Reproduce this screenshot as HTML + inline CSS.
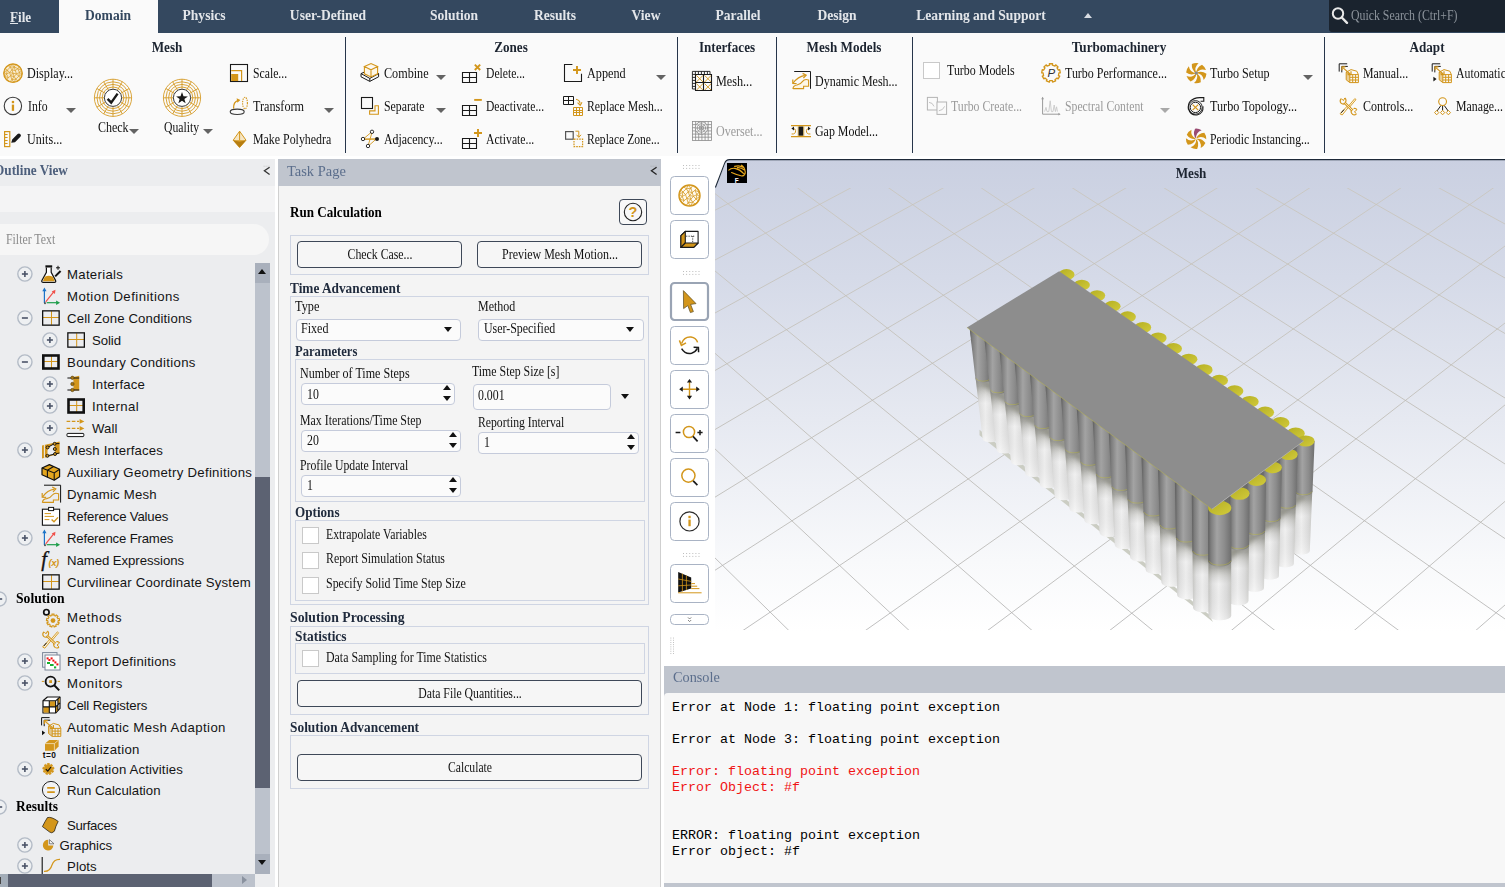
<!DOCTYPE html>
<html lang="en"><head><meta charset="utf-8"><title>Fluent</title>
<style>
*{box-sizing:border-box;margin:0;padding:0}
html,body{width:1505px;height:887px;overflow:hidden;background:#fff}
body{position:relative;font-family:"Liberation Serif",serif;font-size:13px;color:#000}
.a{position:absolute;white-space:pre;line-height:1}
.t{position:absolute;white-space:pre;line-height:16px;height:16px;font-size:14.5px;color:#111;transform:scaleX(.815);transform-origin:0 0}
.tb{position:absolute;white-space:pre;line-height:16px;height:16px;font-size:13.7px;font-weight:bold;transform:scaleX(.96);transform-origin:0 0}
.tc{transform-origin:50% 0}
.tabt{font-size:14.2px;transform:scaleX(.955)}
.g{color:#9a9a9a}
.tab{color:#e3e6ea}
.tr{position:absolute;white-space:pre;font-family:"Liberation Sans",sans-serif;font-size:13.2px;line-height:18px;height:18px;color:#141414}
.mono{position:absolute;white-space:pre;font-family:"Liberation Mono",monospace;font-size:13.33px;line-height:16px;color:#000}
svg{position:absolute;overflow:visible}
.sep{position:absolute;width:1px;background:#26354a;top:37px;height:116px}
.arr{position:absolute;width:0;height:0;border-left:5px solid transparent;border-right:5px solid transparent;border-top:5.4px solid #636363}
.btn{position:absolute;border:1px solid #3e4858;border-radius:4px;background:#f6f6f6;text-align:center;font-size:13px;letter-spacing:-0.5px;line-height:25px;color:#111}
.grp{position:absolute;border:1px solid #cfd5e3}
.inp{position:absolute;border:1px solid #c5cbdb;border-radius:4px;background:#fbfbfb}
.cb{position:absolute;width:17px;height:17px;border:1px solid #c9c9c9;background:#fff}
.gb{position:absolute;width:39px;height:39px;border:1px solid #a9b3c4;border-radius:4px;background:#fff}
</style></head>
<body>
<div class="a" style="left:0;top:0;width:1505px;height:33px;background:#34485f"></div>
<div class="a" style="left:59px;top:0;width:99px;height:33px;background:#fafafa"></div>
<div class="a" style="left:0;top:33px;width:1505px;height:123px;background:#fafafa"></div>
<div class="tb tab tabt" style="left:10px;top:9.21px;font-size:14.6px;transform:scaleX(.9)"><u>F</u>ile</div>
<div class="tb tc tabt" style="left:-42px;width:300px;text-align:center;top:7.21px;color:#34485f">Domain</div>
<div class="tb tc tab tabt" style="left:54px;width:300px;text-align:center;top:7.21px;">Physics</div>
<div class="tb tc tab tabt" style="left:178px;width:300px;text-align:center;top:7.21px;">User-Defined</div>
<div class="tb tc tab tabt" style="left:304px;width:300px;text-align:center;top:7.21px;">Solution</div>
<div class="tb tc tab tabt" style="left:405px;width:300px;text-align:center;top:7.21px;">Results</div>
<div class="tb tc tab tabt" style="left:496px;width:300px;text-align:center;top:7.21px;">View</div>
<div class="tb tc tab tabt" style="left:588px;width:300px;text-align:center;top:7.21px;">Parallel</div>
<div class="tb tc tab tabt" style="left:687px;width:300px;text-align:center;top:7.21px;">Design</div>
<div class="tb tc tab tabt" style="left:830.5px;width:300px;text-align:center;top:7.21px;">Learning and Support</div>
<div class="a" style="left:1083.5px;top:13px;width:0;height:0;border-left:4.5px solid transparent;border-right:4.5px solid transparent;border-bottom:5px solid #d8dce2"></div>
<div class="a" style="left:1329px;top:0;width:176px;height:32px;background:#1a232e;border-radius:0 0 0 3px"></div>
<svg style="left:1331px;top:6px" width="18" height="18" viewBox="0 0 18 18"><circle cx="7" cy="7.5" r="5.2" fill="none" stroke="#e8e8e8" stroke-width="2"/><path d="M10.8 11.5 L16 16.8" stroke="#e8e8e8" stroke-width="2.4" stroke-linecap="round"/></svg>
<div class="t " style="left:1351px;top:7.11px;color:#8d949c">Quick Search (Ctrl+F)</div>
<div class="sep" style="left:345px"></div>
<div class="sep" style="left:677px"></div>
<div class="sep" style="left:776px"></div>
<div class="sep" style="left:912px"></div>
<div class="sep" style="left:1324px"></div>
<div class="tb tc " style="left:16.5px;width:300px;text-align:center;top:40.18px;color:#1c2430">Mesh</div>
<div class="tb tc " style="left:360.5px;width:300px;text-align:center;top:40.18px;color:#1c2430">Zones</div>
<div class="tb tc " style="left:577px;width:300px;text-align:center;top:40.18px;color:#1c2430">Interfaces</div>
<div class="tb tc " style="left:694px;width:300px;text-align:center;top:40.18px;color:#1c2430">Mesh Models</div>
<div class="tb tc " style="left:968.5px;width:300px;text-align:center;top:40.18px;color:#1c2430">Turbomachinery</div>
<div class="tb tc " style="left:1277px;width:300px;text-align:center;top:40.18px;color:#1c2430">Adapt</div>
<div class="t " style="left:27.2px;top:65.11px;transform:scaleX(0.836);">Display...</div>
<div class="t " style="left:28px;top:98.11px;transform:scaleX(0.811);">Info</div>
<div class="arr" style="left:65.6px;top:108px;border-top-color:#636363"></div>
<div class="t " style="left:27px;top:131.11px;transform:scaleX(0.832);">Units...</div>
<div class="t " style="left:97.9px;top:119.11px;transform:scaleX(0.826);">Check</div>
<div class="arr" style="left:128.6px;top:129px;border-top-color:#636363"></div>
<div class="t " style="left:164px;top:119.11px;transform:scaleX(0.809);">Quality</div>
<div class="arr" style="left:203.29999999999998px;top:129px;border-top-color:#636363"></div>
<div class="t " style="left:253px;top:65.11px;transform:scaleX(0.807);">Scale...</div>
<div class="t " style="left:253px;top:98.11px;transform:scaleX(0.842);">Transform</div>
<div class="arr" style="left:323.6px;top:108px;border-top-color:#636363"></div>
<div class="t " style="left:253px;top:131.11px;transform:scaleX(0.820);">Make Polyhedra</div>
<div class="t " style="left:384px;top:65.11px;transform:scaleX(0.839);">Combine</div>
<div class="arr" style="left:435.6px;top:75px;border-top-color:#636363"></div>
<div class="t " style="left:384px;top:98.11px;transform:scaleX(0.813);">Separate</div>
<div class="arr" style="left:435.6px;top:108px;border-top-color:#636363"></div>
<div class="t " style="left:384px;top:131.11px;transform:scaleX(0.815);">Adjacency...</div>
<div class="t " style="left:486px;top:65.11px;transform:scaleX(0.801);">Delete...</div>
<div class="t " style="left:486px;top:98.11px;transform:scaleX(0.797);">Deactivate...</div>
<div class="t " style="left:486px;top:131.11px;transform:scaleX(0.805);">Activate...</div>
<div class="t " style="left:587px;top:65.11px;transform:scaleX(0.841);">Append</div>
<div class="arr" style="left:655.6px;top:75px;border-top-color:#636363"></div>
<div class="t " style="left:587px;top:98.11px;transform:scaleX(0.809);">Replace Mesh...</div>
<div class="t " style="left:587px;top:131.11px;transform:scaleX(0.798);">Replace Zone...</div>
<div class="t " style="left:715.8px;top:73.11px;transform:scaleX(0.840);">Mesh...</div>
<div class="t g" style="left:715.8px;top:123.11px;transform:scaleX(0.829);">Overset...</div>
<div class="t " style="left:815px;top:73.11px;transform:scaleX(0.827);">Dynamic Mesh...</div>
<div class="t " style="left:815px;top:123.11px;transform:scaleX(0.823);">Gap Model...</div>
<div class="cb" style="left:923px;top:62px"></div>
<div class="t " style="left:947px;top:62.11px;transform:scaleX(0.824);">Turbo Models</div>
<div class="t g" style="left:951px;top:98.11px;transform:scaleX(0.814);">Turbo Create...</div>
<div class="t " style="left:1065px;top:65.11px;transform:scaleX(0.825);">Turbo Performance...</div>
<div class="t g" style="left:1065px;top:98.11px;transform:scaleX(0.810);">Spectral Content</div>
<div class="arr" style="left:1159.6px;top:108px;border-top-color:#a8a8a8"></div>
<div class="t " style="left:1210px;top:65.11px;transform:scaleX(0.833);">Turbo Setup</div>
<div class="arr" style="left:1302.6px;top:75px;border-top-color:#636363"></div>
<div class="t " style="left:1210px;top:98.11px;transform:scaleX(0.840);">Turbo Topology...</div>
<div class="t " style="left:1210px;top:131.11px;transform:scaleX(0.810);">Periodic Instancing...</div>
<div class="t " style="left:1362.7px;top:65.11px;transform:scaleX(0.819);">Manual...</div>
<div class="t " style="left:1455.7px;top:65.11px;">Automatic</div>
<div class="t " style="left:1362.7px;top:98.11px;transform:scaleX(0.827);">Controls...</div>
<div class="t " style="left:1455.7px;top:98.11px;transform:scaleX(0.815);">Manage...</div>
<svg style="left:0;top:0" width="1505" height="160" viewBox="0 0 1505 160"><circle cx="13" cy="73.2" r="9.3" fill="#f8ebcd" stroke="#d3961b" stroke-width="1.2"/><path d="M13.0 73.2L14.1 76.6M13.0 73.2L11.9 69.8M13.0 73.2L16.5 73.9M13.0 73.2L9.5 72.5M13.0 73.2L10.7 75.8M16.5 73.9L18.7 76.3M16.5 73.9L19.5 72.4M16.5 73.9L15.3 70.6M16.5 73.9L14.1 76.6M14.1 76.6L15.8 79.1M14.1 76.6L10.7 75.8M14.1 76.6L11.8 79.6M10.7 75.8L8.3 77.7M10.7 75.8L9.5 72.5M10.7 75.8L11.8 79.6M9.5 72.5L7.3 70.1M9.5 72.5L6.5 74.0M9.5 72.5L11.9 69.8M11.9 69.8L10.2 67.3M11.9 69.8L15.3 70.6M11.9 69.8L14.2 66.8M15.3 70.6L17.7 68.7M15.3 70.6L14.2 66.8M18.7 76.3L20.6 77.9M18.7 76.3L21.9 74.1M18.7 76.3L19.5 72.4M18.7 76.3L15.8 79.1M15.8 79.1L17.8 80.7M15.8 79.1L14.1 82.1M15.8 79.1L11.8 79.6M11.8 79.6L10.2 81.7M11.8 79.6L14.1 82.1M8.3 77.7L6.8 79.6M8.3 77.7L4.6 76.3M8.3 77.7L6.5 74.0M6.5 74.0L4.6 76.3M6.5 74.0L4.1 72.3M6.5 74.0L7.3 70.1M7.3 70.1L5.4 68.5M7.3 70.1L4.1 72.3M7.3 70.1L10.2 67.3M10.2 67.3L8.2 65.7M10.2 67.3L11.9 64.3M10.2 67.3L14.2 66.8M14.2 66.8L15.8 64.7M14.2 66.8L11.9 64.3M14.2 66.8L17.7 68.7M17.7 68.7L19.2 66.8M17.7 68.7L21.4 70.1M17.7 68.7L19.5 72.4M19.5 72.4L21.4 70.1M19.5 72.4L21.9 74.1M21.9 74.1L21.4 70.1M21.9 74.1L20.6 77.9M20.6 77.9L17.8 80.7M17.8 80.7L14.1 82.1M14.1 82.1L10.2 81.7M10.2 81.7L6.8 79.6M6.8 79.6L4.6 76.3M4.6 76.3L4.1 72.3M4.1 72.3L5.4 68.5M5.4 68.5L8.2 65.7M8.2 65.7L11.9 64.3M11.9 64.3L15.8 64.7M15.8 64.7L19.2 66.8M19.2 66.8L21.4 70.1" stroke="#d3961b" stroke-width="0.65" fill="none"/><circle cx="12.9" cy="105.9" r="8.7" fill="none" stroke="#3a3a3a" stroke-width="1.1"/><rect x="11.8" y="104.6" width="2.3" height="6.2" fill="#d3961b"/><rect x="11.8" y="100.9" width="2.3" height="2.3" fill="#d3961b"/><rect x="4.6" y="131.6" width="5.2" height="15" fill="none" stroke="#d3961b" stroke-width="1.2"/><path d="M4.6 134.5h3M4.6 137.5h3M4.6 140.5h3M4.6 143.5h3" stroke="#d3961b" stroke-width="1"/><path d="M11.2 142.8 L12.2 139.4 L17.6 134 Q19 132.8 20.4 134.2 Q21.6 135.6 20.4 136.8 L15 142.2 Z" fill="#1a1a1a"/><circle cx="113" cy="97.8" r="18.6" fill="none" stroke="#d3961b" stroke-width="0.85"/><circle cx="113" cy="97.8" r="16.0" fill="none" stroke="#d3961b" stroke-width="0.85"/><circle cx="113" cy="97.8" r="13.4" fill="none" stroke="#d3961b" stroke-width="0.85"/><circle cx="113" cy="97.8" r="10.8" fill="none" stroke="#d3961b" stroke-width="0.85"/><path d="M113.00 88.80L113.00 79.20M117.50 90.01L122.30 81.69M120.79 93.30L129.11 88.50M122.00 97.80L131.60 97.80M120.79 102.30L129.11 107.10M117.50 105.59L122.30 113.91M113.00 106.80L113.00 116.40M108.50 105.59L103.70 113.91M105.21 102.30L96.89 107.10M104.00 97.80L94.40 97.80M105.21 93.30L96.89 88.50M108.50 90.01L103.70 81.69" stroke="#d3961b" stroke-width="0.85" fill="none"/><circle cx="113" cy="97.8" r="8.6" fill="#fff" stroke="#3a3a3a" stroke-width="1"/><path d="M107.6 98.8 L111.2 102.6 L117.6 93.6" fill="none" stroke="#1a1a1a" stroke-width="2.4"/><circle cx="182" cy="97.8" r="18.6" fill="none" stroke="#d3961b" stroke-width="0.85"/><circle cx="182" cy="97.8" r="16.0" fill="none" stroke="#d3961b" stroke-width="0.85"/><circle cx="182" cy="97.8" r="13.4" fill="none" stroke="#d3961b" stroke-width="0.85"/><circle cx="182" cy="97.8" r="10.8" fill="none" stroke="#d3961b" stroke-width="0.85"/><path d="M182.00 88.80L182.00 79.20M186.50 90.01L191.30 81.69M189.79 93.30L198.11 88.50M191.00 97.80L200.60 97.80M189.79 102.30L198.11 107.10M186.50 105.59L191.30 113.91M182.00 106.80L182.00 116.40M177.50 105.59L172.70 113.91M174.21 102.30L165.89 107.10M173.00 97.80L163.40 97.80M174.21 93.30L165.89 88.50M177.50 90.01L172.70 81.69" stroke="#d3961b" stroke-width="0.85" fill="none"/><circle cx="182" cy="97.8" r="8.6" fill="#fff" stroke="#3a3a3a" stroke-width="1"/><polygon points="182.00,92.10 183.47,96.28 187.90,96.38 184.38,99.07 185.64,103.32 182.00,100.80 178.36,103.32 179.62,99.07 176.10,96.38 180.53,96.28" fill="#1a1a1a"/><rect x="230.5" y="64.5" width="17" height="17" fill="none" stroke="#1a1a1a" stroke-width="1.1"/><rect x="231.2" y="74" width="7" height="7" fill="#d3961b"/><path d="M231.2 70.6 H241.6 V81" fill="none" stroke="#d3961b" stroke-width="1.2"/><ellipse cx="237.2" cy="111.8" rx="7" ry="2.7" fill="none" stroke="#3a3a3a" stroke-width="1.1"/><path d="M233.6 108.6 Q233.2 102 238.2 100.4" fill="none" stroke="#d3961b" stroke-width="1.3"/><path d="M236.6 98.2 L240.4 100 L237.4 102.8 Z" fill="#d3961b"/><ellipse cx="245" cy="103" rx="2.4" ry="5.8" fill="none" stroke="#d3961b" stroke-width="1.1" stroke-dasharray="1.4 0.9"/><path d="M239.6 131.2 L246 140.2 L239.6 147.4 L233.2 140.2 Z" fill="#f6e6c4" stroke="#d3961b" stroke-width="1"/><path d="M233.2 140.2 L246 140.2 L239.6 147.4 Z" fill="#d3961b"/><path d="M239.6 131.2 L239.6 140.2" stroke="#d3961b" stroke-width="1"/><path d="M233.2 140.2 L239.6 142 L246 140.2 L239.6 147.4 Z" fill="#b57d12"/><path d="M361 73.6 L369.8 69.6 L378.6 73.6 L369.8 78.4 Z M361 73.6 V76.8 L369.8 81.4 L378.6 76.8 V73.6 M369.8 78.4 V81.4" fill="#fafafa" stroke="#1a1a1a" stroke-width="1"/><path d="M364.4 66.6 L371 63.6 L377.6 66.6 L371 69.8 Z M364.4 66.6 V73.8 L371 77 L377.6 73.8 V66.6 M371 69.8 V77" fill="#fdf6e6" stroke="#d3961b" stroke-width="1.1"/><rect x="361.5" y="97.5" width="11" height="11" fill="none" stroke="#1a1a1a" stroke-width="1.1"/><path d="M375 105.8 H378.4 V114.3 H369.6 V110.9 H375 Z" fill="none" stroke="#d3961b" stroke-width="1.1"/><path d="M363.6 139 H376 M372 132.4 L368.2 145.4 M363.8 138.6 L371.4 132.2 M376 139.2 L368.8 145.6 M364 139.4 L376 139" stroke="#d3961b" stroke-width="0.9" fill="none"/><circle cx="372" cy="131.8" r="1.7" fill="#fff" stroke="#1a1a1a" stroke-width="0.9"/><circle cx="363" cy="139" r="1.7" fill="#fff" stroke="#1a1a1a" stroke-width="0.9"/><circle cx="368" cy="146" r="1.7" fill="#fff" stroke="#1a1a1a" stroke-width="0.9"/><circle cx="377" cy="139" r="2" fill="#1a1a1a"/><path d="M462.5 72.5h14v10h-14Z M469.5 72.5v10 M462.5 77.5h14" fill="none" stroke="#1a1a1a" stroke-width="1.1"/><path d="M474.8 64.6 L480.2 70 M480.2 64.6 L474.8 70" stroke="#d3961b" stroke-width="1.9"/><path d="M462.5 105.5h14v10h-14Z M469.5 105.5v10 M462.5 110.5h14" fill="none" stroke="#1a1a1a" stroke-width="1.1"/><path d="M474.2 99.9 H481.8" stroke="#d3961b" stroke-width="1.9"/><path d="M462.5 138.5h14v10h-14Z M469.5 138.5v10 M462.5 143.5h14" fill="none" stroke="#1a1a1a" stroke-width="1.1"/><path d="M474 133 H482 M478 129 V137" stroke="#d3961b" stroke-width="1.9"/><path d="M572.4 64.5 H564.5 V81.5 H581.5 V73.8" fill="none" stroke="#1a1a1a" stroke-width="1.1"/><path d="M573 70 H581 M577 66 V74" stroke="#d3961b" stroke-width="1.9"/><path d="M563.5 96.5 h10 v8 h-10 Z M568.5 96.5 v8 M563.5 100.5 h10" fill="none" stroke="#1a1a1a" stroke-width="1"/><path d="M573.5 107.5 h9 v8 h-9 Z M576.5 107.5 v8 M579.5 107.5 v8 M573.5 110.5 h9 M573.5 112.5 h9" fill="none" stroke="#d3961b" stroke-width="1"/><path d="M576 99.2 Q580 100 580 103.6" fill="none" stroke="#d3961b" stroke-width="1.1"/><path d="M577.6 102.6 L580.2 105.4 L582 102.2" fill="none" stroke="#d3961b" stroke-width="1.1"/><rect x="565.6" y="131.6" width="7.6" height="7.6" fill="none" stroke="#555" stroke-width="1.2"/><rect x="574" y="139.2" width="8.6" height="7.4" fill="none" stroke="#d3961b" stroke-width="1.2" stroke-dasharray="1.6 1"/><path d="M575.4 131.2 H578.8 V137 M576.6 134.8 L578.8 137.4 L581 134.8" fill="none" stroke="#d3961b" stroke-width="1"/><path d="M692.4 71.4 h17.6 v3 M692.4 71.4 v17.6 h3 M692.4 74.4 h3 M692.4 77.4 h3 M692.4 80.4 h3 M692.4 83.4 h3 M692.4 86.4 h3 M695.4 71.4 v3 M698.4 71.4 v3 M701.4 71.4 v3 M704.4 71.4 v3 M707.4 71.4 v3" fill="none" stroke="#1a1a1a" stroke-width="0.9"/><path d="M696.4 75.4 L703 82 M703 75.4 L696.4 82 M704.6 75.4 L711.2 82 M711.2 75.4 L704.6 82 M696.4 83.6 L703 90.2 M703 83.6 L696.4 90.2 M704.6 83.6 L711.2 90.2 M711.2 83.6 L704.6 90.2" stroke="#d3961b" stroke-width="0.9" fill="none"/><path d="M695.5 74.5 h16 v16 h-16 Z M703.5 74.5 v16 M695.5 82.5 h16" fill="none" stroke="#1a1a1a" stroke-width="1.1"/><g stroke="#8a8a8a" stroke-width="0.8" fill="none"><rect x="692.4" y="121.4" width="19" height="19"/><path d="M695.6 121.4 v19 M692.4 124.6 h19"/><path d="M698.7 121.4 v19 M692.4 127.7 h19"/><path d="M701.9 121.4 v19 M692.4 130.9 h19"/><path d="M705.1 121.4 v19 M692.4 134.1 h19"/><path d="M708.2 121.4 v19 M692.4 137.2 h19"/><circle cx="701.4" cy="128" r="6.2" fill="#fafafa"/><circle cx="701.4" cy="128" r="4.2"/><circle cx="701.4" cy="128" r="2.2"/><path d="M701.4 121.8 v12.4 M695.2 128 h12.4 M697 123.6 l8.8 8.8 M705.8 123.6 l-8.8 8.8"/></g><path d="M794.2 71.5 H810.5 V88.8" fill="none" stroke="#1a1a1a" stroke-width="1"/><path d="M793 88.4 Q793.4 85.4 797 85 Q800.6 84.4 802.6 81.4 Q804.6 78.6 808.6 80 V86.2 H803.6 V88.6 H793.4 Z" fill="#fdf6e6" stroke="#d3961b" stroke-width="1.1"/><path d="M793.2 83 Q798 76.6 804.8 75.4" fill="none" stroke="#d3961b" stroke-width="1.2"/><path d="M802.6 73.4 L806.2 75.2 L803.4 78" fill="none" stroke="#d3961b" stroke-width="1.2"/><path d="M792.8 79.4 L792.8 83.4 L796.6 83.6" fill="none" stroke="#d3961b" stroke-width="1.2"/><path d="M791 125.6 H811 M791 136.6 H811" stroke="#d3961b" stroke-width="1.3"/><rect x="797.6" y="126.2" width="6.8" height="9.8" fill="#e8c77a"/><rect x="798.6" y="126.6" width="4.6" height="9" fill="#1a1a1a"/><path d="M791.6 134 Q795.8 134.4 795.6 130.6 Q795.4 128.6 793.2 128.6" fill="none" stroke="#d3961b" stroke-width="1"/><path d="M794 126.6 L791.4 128.6 L794 130.6 Z" fill="#1a1a1a"/><path d="M810.4 134 Q806.2 134.4 806.4 130.6 Q806.6 128.6 808.8 128.6" fill="none" stroke="#d3961b" stroke-width="1"/><path d="M808 126.6 L810.6 128.6 L808 130.6 Z" fill="#1a1a1a"/><rect x="927.4" y="97.4" width="10" height="12.6" fill="#fafafa" stroke="#b4b4b4" stroke-width="1"/><rect x="937" y="102" width="9.6" height="12.4" fill="#fafafa" stroke="#b4b4b4" stroke-width="1"/><path d="M929 102.4 Q932.6 102.4 934 106.4 M938.8 110.8 Q943 110.4 944.6 106.4" fill="none" stroke="#c4c4c4" stroke-width="1"/><path d="M1049.39 63.74L1052.61 63.74L1052.37 65.12L1054.95 66.06L1055.65 64.85L1058.12 66.92L1057.05 67.82L1058.42 70.20L1059.74 69.72L1060.30 72.90L1058.90 72.90L1058.42 75.60L1059.74 76.08L1058.12 78.88L1057.05 77.98L1054.95 79.74L1055.65 80.95L1052.61 82.06L1052.37 80.68L1049.63 80.68L1049.39 82.06L1046.35 80.95L1047.05 79.74L1044.95 77.98L1043.88 78.88L1042.26 76.08L1043.58 75.60L1043.10 72.90L1041.70 72.90L1042.26 69.72L1043.58 70.20L1044.95 67.82L1043.88 66.92L1046.35 64.85L1047.05 66.06L1049.63 65.12Z" fill="none" stroke="#d3961b" stroke-width="1.3" stroke-linejoin="round"/><text x="1047.6" y="77" font-family="Liberation Sans,sans-serif" font-style="italic" font-size="11.5" fill="#333">P</text><path d="M1042.6 97.6 V114.2 H1059.4" fill="none" stroke="#9a9a9a" stroke-width="1"/><path d="M1041.2 99.2 L1042.6 96.8 L1044 99.2 Z M1058.4 112.8 L1060.6 114.2 L1058.4 115.6 Z" fill="#9a9a9a"/><path d="M1044.6 111.6 L1046 107.4 L1047 111.6 L1048.8 111.6 L1050.2 100.8 L1051.4 111.6 L1053 111.6 L1054.2 105 L1055.4 111.6 L1056.6 106.8 L1057.4 111.6" fill="none" stroke="#c8c8c8" stroke-width="0.9"/><path d="M1196.3 73.1 Q1196.27 67.40 1202.00 64.64 A10.2 10.2 0 0 1 1206.05 70.12 Q1200.03 67.84 1196.3 73.1Z" fill="#d3961b"/><path d="M1196.3 73.1 Q1201.22 70.22 1206.48 73.81 A10.2 10.2 0 0 1 1203.76 80.06 Q1202.72 73.70 1196.3 73.1Z" fill="#d3961b"/><path d="M1196.3 73.1 Q1201.25 75.92 1200.77 82.27 A10.2 10.2 0 0 1 1194.01 83.04 Q1199.00 78.96 1196.3 73.1Z" fill="#d3961b"/><path d="M1196.3 73.1 Q1196.33 78.80 1190.60 81.56 A10.2 10.2 0 0 1 1186.55 76.08 Q1192.57 78.36 1196.3 73.1Z" fill="#d3961b"/><path d="M1196.3 73.1 Q1191.38 75.98 1186.12 72.39 A10.2 10.2 0 0 1 1188.84 66.14 Q1189.88 72.50 1196.3 73.1Z" fill="#d3961b"/><path d="M1196.3 73.1 Q1191.35 70.28 1191.83 63.93 A10.2 10.2 0 0 1 1198.59 63.16 Q1193.60 67.24 1196.3 73.1Z" fill="#d3961b"/><circle cx="1196.3" cy="73.1" r="1.7" fill="#8a8a8a"/><path d="M1196.1 138.8 Q1192.41 134.45 1195.03 128.66 A10.2 10.2 0 0 1 1201.66 130.25 Q1195.57 132.37 1196.1 138.8Z" fill="#9a4b72"/><path d="M1196.1 138.8 Q1198.02 133.43 1204.35 132.80 A10.2 10.2 0 0 1 1206.29 139.33 Q1201.40 135.13 1196.1 138.8Z" fill="#d3961b"/><path d="M1196.1 138.8 Q1201.71 137.78 1205.42 142.95 A10.2 10.2 0 0 1 1200.73 147.89 Q1201.93 141.56 1196.1 138.8Z" fill="#d3961b"/><path d="M1196.1 138.8 Q1199.79 143.15 1197.17 148.94 A10.2 10.2 0 0 1 1190.54 147.35 Q1196.63 145.23 1196.1 138.8Z" fill="#d3961b"/><path d="M1196.1 138.8 Q1194.18 144.17 1187.85 144.80 A10.2 10.2 0 0 1 1185.91 138.27 Q1190.80 142.47 1196.1 138.8Z" fill="#d3961b"/><path d="M1196.1 138.8 Q1190.49 139.82 1186.78 134.65 A10.2 10.2 0 0 1 1191.47 129.71 Q1190.27 136.04 1196.1 138.8Z" fill="#d3961b"/><circle cx="1196.1" cy="138.8" r="1" fill="#f4e3bd"/><circle cx="1195.4" cy="107.4" r="5.2" fill="none" stroke="#1a1a1a" stroke-width="1"/><circle cx="1195.4" cy="107.4" r="6.8" fill="none" stroke="#1a1a1a" stroke-width="0.9"/><path d="M1188.4 109.4 Q1187 98.4 1199.8 97.6 H1203.8 V101.2 H1200.6 M1188.6 109 Q1190.4 115.6 1197 115 Q1203.6 113.6 1203 106.4" fill="none" stroke="#1a1a1a" stroke-width="1.1"/><path d="M1192.6 104.6 L1198.2 110.2 M1198.2 104.6 L1192.6 110.2" stroke="#d3961b" stroke-width="1.2"/><path d="M1339.1999999999998 71.6 V63.8 H1347.1999999999998 M1341.8 72.4 V66.4 H1347.8" fill="none" stroke="#1a1a1a" stroke-width="1"/><path d="M1342.8 67.6 L1350.1999999999998 74" stroke="#d3961b" stroke-width="1.2"/><path d="M1342.0 70.2 V66.8 H1345.3999999999999" fill="none" stroke="#d3961b" stroke-width="1.2"/><path d="M1347.6 74.6 H1351.0 V71.2" fill="none" stroke="#d3961b" stroke-width="1.2"/><path d="M1349.8 74.6 h8.6 v8 h-8.6 Z M1352.7 74.6 v8 M1355.6 74.6 v8 M1349.8 77.3 h8.6 M1349.8 80.0 h8.6" fill="none" stroke="#d3961b" stroke-width="1"/><path d="M1349.8 74.6 L1346.2 72.19999999999999 V79.8 L1349.8 82.6 M1346.2 72.19999999999999 L1351.0 69.6 L1356.8 71.19999999999999 L1358.3999999999999 74.6" fill="none" stroke="#d3961b" stroke-width="1"/><path d="M1346.2 72.19999999999999 L1349.8 74.6 V82.6 L1346.2 79.8 Z" fill="#d3961b" opacity="0.45"/><path d="M1432.1999999999998 71.6 V63.8 H1440.1999999999998 M1434.8 72.4 V66.4 H1440.8" fill="none" stroke="#1a1a1a" stroke-width="1"/><path d="M1435.8 67.6 L1443.1999999999998 74" stroke="#d3961b" stroke-width="1.2"/><path d="M1435.0 70.2 V66.8 H1438.3999999999999" fill="none" stroke="#d3961b" stroke-width="1.2"/><path d="M1440.6 74.6 H1444.0 V71.2" fill="none" stroke="#d3961b" stroke-width="1.2"/><path d="M1442.8 74.6 h8.6 v8 h-8.6 Z M1445.7 74.6 v8 M1448.6 74.6 v8 M1442.8 77.3 h8.6 M1442.8 80.0 h8.6" fill="none" stroke="#d3961b" stroke-width="1"/><path d="M1442.8 74.6 L1439.2 72.19999999999999 V79.8 L1442.8 82.6 M1439.2 72.19999999999999 L1444.0 69.6 L1449.8 71.19999999999999 L1451.3999999999999 74.6" fill="none" stroke="#d3961b" stroke-width="1"/><path d="M1439.2 72.19999999999999 L1442.8 74.6 V82.6 L1439.2 79.8 Z" fill="#d3961b" opacity="0.45"/><path d="M1433.4 76.8 L1436.6 79 L1433.4 81.4 Z" fill="#1a1a1a"/><g transform="translate(1339 97.2) scale(1.0)"><path d="M1 16.6 L3.2 17.8 L9.2 10.4 L8 9.2 Z" fill="#fdf3dc" stroke="#d3961b" stroke-width="0.9"/><path d="M2.2 15.6 L5 12.4" stroke="#1a1a1a" stroke-width="1"/><path d="M9 9.4 L15.8 1.4 L17 2.4 L10.2 10.4 Z" fill="#fdf3dc" stroke="#d3961b" stroke-width="0.9"/><path d="M5.2 5.2 L13.6 13.4" stroke="#d3961b" stroke-width="2.6"/><path d="M5.2 5.2 L13.6 13.4" stroke="#fdf3dc" stroke-width="0.9"/><path d="M2.2 1.4 Q0.2 3.6 2 6 Q3.8 7.6 6 6.4 M5.8 0.6 Q7.8 2.4 6.6 5" fill="none" stroke="#d3961b" stroke-width="1.1"/><path d="M2.4 1.4 L4.4 3.4 L5.8 0.8" fill="none" stroke="#d3961b" stroke-width="1"/><path d="M12.4 12.8 Q11.4 15.2 13.4 17 Q15.6 18.4 17.4 16.6 M14.6 11.4 Q16.8 10.6 18 12.6" fill="none" stroke="#d3961b" stroke-width="1.1"/><path d="M17.4 16.4 L15.4 14.6 L17.8 12.8" fill="none" stroke="#d3961b" stroke-width="1"/></g><path d="M1441 105.4 L1437 111 M1442.6 105.6 V110.6 M1444.2 105.4 L1448.2 111" stroke="#1a1a1a" stroke-width="1"/><circle cx="1442.6" cy="101.6" r="3.9" fill="none" stroke="#d3961b" stroke-width="1.1"/><path d="M1436.7 110.4 L1438.8 112.6 L1436.7 114.8 L1434.6000000000001 112.6 Z" fill="#fafafa" stroke="#d3961b" stroke-width="1"/><path d="M1442.6 110.4 L1444.6999999999998 112.6 L1442.6 114.8 L1440.5 112.6 Z" fill="#fafafa" stroke="#d3961b" stroke-width="1"/><path d="M1448.4 110.4 L1450.5 112.6 L1448.4 114.8 L1446.3000000000002 112.6 Z" fill="#fafafa" stroke="#d3961b" stroke-width="1"/></svg>
<div class="a" style="left:0;top:159px;width:275px;height:728px;background:#ecedef"></div>
<div class="a" style="left:0;top:186px;width:275px;height:26px;background:#f4f4f5"></div>
<div class="tb " style="left:-6px;top:163.18px;color:#4d5f7c;transform:scaleX(0.967);">Outline View</div>
<svg style="left:262px;top:165px" width="10" height="12" viewBox="0 0 10 12"><path d="M7.6 2.2 L2.4 5.8 L7.6 9.6" fill="none" stroke="#333" stroke-width="1.3"/><path d="M1.6 1.2 H8" stroke="#aaa" stroke-width="0.6" stroke-dasharray="1 1"/></svg>
<div class="a" style="left:-16px;top:224px;width:285px;height:31px;border-radius:15.5px;background:#f6f6f6"></div>
<div class="t " style="left:6px;top:230.71px;color:#8a8a8a">Filter Text</div>
<div class="a" style="left:255px;top:263px;width:15px;height:611px;background:#bcc2cc"></div>
<div class="a" style="left:255px;top:263px;width:15px;height:20px;background:#a9b0bc"></div>
<div class="a" style="left:255px;top:477px;width:15px;height:311px;background:#5c6272"></div>
<div class="a" style="left:255px;top:854px;width:15px;height:20px;background:#a9b0bc"></div>
<div class="a" style="left:258px;top:269px;width:0;height:0;border-left:4.5px solid transparent;border-right:4.5px solid transparent;border-bottom:5.5px solid #111"></div>
<div class="a" style="left:258px;top:860px;width:0;height:0;border-left:4.5px solid transparent;border-right:4.5px solid transparent;border-top:5.5px solid #111"></div>
<div class="a" style="left:0;top:874px;width:255px;height:13px;background:#bcc2cc"></div>
<div class="a" style="left:0;top:874px;width:8px;height:13px;background:#a3adb8"></div>
<div class="a" style="left:0;top:877px;width:1px;height:7px;background:#444"></div>
<div class="a" style="left:8px;top:874px;width:204px;height:13px;background:#5c6272"></div>
<div class="a" style="left:242px;top:876px;width:0;height:0;border-top:4.5px solid transparent;border-bottom:4.5px solid transparent;border-left:5.5px solid #8a929f"></div>
<div class="tr" style="left:67px;top:265.6px;letter-spacing:0.295px">Materials</div>
<div class="tr" style="left:67px;top:287.6px;letter-spacing:0.449px">Motion Definitions</div>
<div class="tr" style="left:67px;top:309.6px;letter-spacing:0.134px">Cell Zone Conditions</div>
<div class="tr" style="left:92px;top:331.6px;letter-spacing:-0.090px">Solid</div>
<div class="tr" style="left:67px;top:353.6px;letter-spacing:0.335px">Boundary Conditions</div>
<div class="tr" style="left:92px;top:375.6px;letter-spacing:0.205px">Interface</div>
<div class="tr" style="left:92px;top:397.6px;letter-spacing:0.384px">Internal</div>
<div class="tr" style="left:92px;top:419.6px;letter-spacing:0.081px">Wall</div>
<div class="tr" style="left:67px;top:441.6px;letter-spacing:0.147px">Mesh Interfaces</div>
<div class="tr" style="left:67px;top:463.6px;letter-spacing:0.287px">Auxiliary Geometry Definitions</div>
<div class="tr" style="left:67px;top:485.6px;letter-spacing:0.226px">Dynamic Mesh</div>
<div class="tr" style="left:67px;top:507.6px;letter-spacing:-0.171px">Reference Values</div>
<div class="tr" style="left:67px;top:529.6px;letter-spacing:-0.187px">Reference Frames</div>
<div class="tr" style="left:67px;top:551.6px;letter-spacing:-0.059px">Named Expressions</div>
<div class="tr" style="left:67px;top:573.6px;letter-spacing:0.173px">Curvilinear Coordinate System</div>
<div class="tr" style="left:67px;top:608.6px;letter-spacing:0.654px">Methods</div>
<div class="tr" style="left:67px;top:630.6px;letter-spacing:0.381px">Controls</div>
<div class="tr" style="left:67px;top:652.6px;letter-spacing:0.244px">Report Definitions</div>
<div class="tr" style="left:67px;top:674.6px;letter-spacing:0.699px">Monitors</div>
<div class="tr" style="left:67px;top:696.6px;letter-spacing:-0.140px">Cell Registers</div>
<div class="tr" style="left:67px;top:718.6px;letter-spacing:0.405px">Automatic Mesh Adaption</div>
<div class="tr" style="left:67px;top:740.6px;letter-spacing:0.267px">Initialization</div>
<div class="tr" style="left:59.5px;top:760.6px;letter-spacing:0.149px">Calculation Activities</div>
<div class="tr" style="left:67px;top:781.6px;letter-spacing:0.028px">Run Calculation</div>
<div class="tr" style="left:67px;top:816.6px;letter-spacing:-0.286px">Surfaces</div>
<div class="tr" style="left:59.5px;top:836.6px;letter-spacing:-0.015px">Graphics</div>
<div class="tr" style="left:67px;top:857.6px;letter-spacing:0.091px">Plots</div>
<div class="tb " style="left:16px;top:591.18px;color:#000;transform:scaleX(0.997);">Solution</div>
<div class="tb " style="left:16px;top:799.48px;color:#000;transform:scaleX(0.985);">Results</div>
<svg style="left:0;top:255px;clip-path:inset(0 0 0 0)" width="255" height="619" viewBox="0 255 255 619"><circle cx="24.9" cy="274" r="7.1" fill="#eef0f2" stroke="#b3bbc6" stroke-width="1.4"/><path d="M21.9 274 H27.9" stroke="#4b5468" stroke-width="1.6"/><path d="M24.9 271 V277" stroke="#4b5468" stroke-width="1.6"/><path d="M46.4 267.6 V272.4 L41.8 280.6 Q41.4 282.4 43.2 282.4 H54.4 Q56.2 282.4 55.6 280.6 L51.2 272.4 V267.6" fill="#fff" stroke="#111" stroke-width="1.2"/><path d="M44.8 276.8 Q48.8 274.6 52.8 276.8 L54.8 281.2 H42.8 Z" fill="#d3961b"/><path d="M45.4 266.4 H52.2" stroke="#111" stroke-width="2.2"/><path d="M56 267.8 H60 M58 265.8 V269.8" stroke="#111" stroke-width="1"/><path d="M55.2 276.4 L60.6 271" stroke="#111" stroke-width="2"/><path d="M44.4 302.90000000000003 V290.3" stroke="#1a73c8" stroke-width="1.2"/><path d="M42.300000000000004 291.3 L44.4 287.5 L46.5 291.3 Z" fill="#1a73c8"/><path d="M45.7 301.90000000000003 L53.7 291.90000000000003" stroke="#f0504a" stroke-width="1.2"/><path d="M55.5 289.7 L54.900000000000006 293.90000000000003 L51.7 291.5 Z" fill="#f0504a"/><path d="M46.7 302.7 H56.7" stroke="#1e9e4a" stroke-width="1.2"/><path d="M56.1 300.5 L60.1 302.7 L56.1 304.90000000000003 Z" fill="#1e9e4a"/><rect x="44.1" y="302.3" width="1.8" height="1.8" fill="#555"/><circle cx="24.9" cy="318" r="7.1" fill="#eef0f2" stroke="#b3bbc6" stroke-width="1.4"/><path d="M21.9 318 H27.9" stroke="#4b5468" stroke-width="1.6"/><path d="M51.5 311.2 V324.8 M43 317.5 H58.8" stroke="#d3961b" stroke-width="1"/><rect x="42.65" y="310.84999999999997" width="16.5" height="14.299999999999999" fill="none" stroke="#111" stroke-width="1.3"/><circle cx="49.9" cy="340" r="7.1" fill="#eef0f2" stroke="#b3bbc6" stroke-width="1.4"/><path d="M46.9 340 H52.9" stroke="#4b5468" stroke-width="1.6"/><path d="M49.9 337 V343" stroke="#4b5468" stroke-width="1.6"/><path d="M76.7 333.2 V346.8 M68.2 339.5 H84.0" stroke="#d3961b" stroke-width="1"/><rect x="67.85000000000001" y="332.84999999999997" width="16.5" height="14.299999999999999" fill="none" stroke="#111" stroke-width="1.3"/><circle cx="24.9" cy="362" r="7.1" fill="#eef0f2" stroke="#b3bbc6" stroke-width="1.4"/><path d="M21.9 362 H27.9" stroke="#4b5468" stroke-width="1.6"/><path d="M51.5 355.2 V368.8 M43 361.5 H58.8" stroke="#d3961b" stroke-width="1"/><rect x="43.3" y="355.5" width="15.200000000000001" height="13.0" fill="none" stroke="#111" stroke-width="2.6"/><circle cx="49.9" cy="384" r="7.1" fill="#eef0f2" stroke="#b3bbc6" stroke-width="1.4"/><path d="M46.9 384 H52.9" stroke="#4b5468" stroke-width="1.6"/><path d="M49.9 381 V387" stroke="#4b5468" stroke-width="1.6"/><path d="M73.4 377 L79.2 375.8 V390.6 H73.4 Z" fill="#d3961b"/><path d="M67.4 378 H79.2 M67.4 390 H79.2" stroke="#111" stroke-width="1.1"/><circle cx="72.4" cy="377.8" r="1.7" fill="#a8760f" stroke="#3a2a05" stroke-width="0.5"/><circle cx="72.4" cy="384" r="1.7" fill="#a8760f" stroke="#3a2a05" stroke-width="0.5"/><circle cx="72.4" cy="390" r="1.7" fill="#a8760f" stroke="#3a2a05" stroke-width="0.5"/><circle cx="49.9" cy="406" r="7.1" fill="#eef0f2" stroke="#b3bbc6" stroke-width="1.4"/><path d="M46.9 406 H52.9" stroke="#4b5468" stroke-width="1.6"/><path d="M49.9 403 V409" stroke="#4b5468" stroke-width="1.6"/><path d="M76.7 399.2 V412.8 M68.2 405.5 H84.0" stroke="#d3961b" stroke-width="1"/><rect x="68.5" y="399.5" width="15.200000000000001" height="13.0" fill="none" stroke="#111" stroke-width="2.6"/><circle cx="49.9" cy="428" r="7.1" fill="#eef0f2" stroke="#b3bbc6" stroke-width="1.4"/><path d="M46.9 428 H52.9" stroke="#4b5468" stroke-width="1.6"/><path d="M49.9 425 V431" stroke="#4b5468" stroke-width="1.6"/><path d="M66.60000000000001 421.4 H79.2" stroke="#d3961b" stroke-width="1.1" stroke-dasharray="3.6 1.6"/><path d="M79.60000000000001 419.0 L84.4 421.4 L79.60000000000001 423.79999999999995 Z" fill="#d3961b"/><path d="M66.60000000000001 428.4 H79.2" stroke="#d3961b" stroke-width="1.1" stroke-dasharray="3.6 1.6"/><path d="M79.60000000000001 426.0 L84.4 428.4 L79.60000000000001 430.79999999999995 Z" fill="#d3961b"/><rect x="67.0" y="433.4" width="16.8" height="3.2" rx="0.8" fill="#fff" stroke="#111" stroke-width="1"/><circle cx="24.9" cy="450" r="7.1" fill="#eef0f2" stroke="#b3bbc6" stroke-width="1.4"/><path d="M21.9 450 H27.9" stroke="#4b5468" stroke-width="1.6"/><path d="M24.9 447 V453" stroke="#4b5468" stroke-width="1.6"/><path d="M42 445.6 L59.6 441.6 V453.4 L42 458.6 Z" fill="#d3961b"/><path d="M44.4 445 V457.8" stroke="#ecedef" stroke-width="1"/><path d="M47.6 447.4 L54.6 443.6 L55 454 L47.4 455.8 Z" fill="#ecedef"/><path d="M47.6 447.4 L54.6 443.6 H59.4 M47.4 455.8 L55 454 L59.4 453" fill="none" stroke="#111" stroke-width="1"/><circle cx="47.6" cy="447.4" r="1.5" fill="#d3961b" stroke="#111" stroke-width="0.9"/><circle cx="54.6" cy="443.8" r="1.5" fill="#d3961b" stroke="#111" stroke-width="0.9"/><circle cx="54.8" cy="449" r="1.5" fill="#d3961b" stroke="#111" stroke-width="0.9"/><circle cx="55" cy="454" r="1.5" fill="#d3961b" stroke="#111" stroke-width="0.9"/><circle cx="47.4" cy="455.8" r="1.5" fill="#d3961b" stroke="#111" stroke-width="0.9"/><path d="M42 468 L49.4 464.6 L59.6 469.2 V476.8 L54.2 480.2 L42 474.8 Z" fill="#e3a61f" stroke="#111" stroke-width="1.2" stroke-linejoin="round"/><path d="M42 468 L54.2 473 L59.6 469.2 M54.2 473 V480.2 M47.4 470.2 L53.6 466.6 M47.4 470.2 V477.2" fill="none" stroke="#111" stroke-width="1.1"/><path d="M44 485.2 H60.6 V502.6" fill="none" stroke="#111" stroke-width="1"/><path d="M42.4 502.2 Q42.8 499 46.6 498.6 Q50.4 498 52.4 495 Q54.6 492.2 58.6 493.8 V500 H53.4 V502.4 H42.8 Z" fill="none" stroke="#d3961b" stroke-width="1.1"/><path d="M42.6 496.8 Q47.4 490.2 54.4 489.2" fill="none" stroke="#d3961b" stroke-width="1.2"/><path d="M52.2 487 L55.8 489 L53 491.8" fill="none" stroke="#d3961b" stroke-width="1.2"/><path d="M42.2 493 V497.2 L46.2 497.4" fill="none" stroke="#d3961b" stroke-width="1.2"/><rect x="42.4" y="509.2" width="17.2" height="16" fill="#fff" stroke="#111" stroke-width="1.1"/><rect x="48.6" y="507.4" width="5" height="3.2" fill="#fff" stroke="#111" stroke-width="1"/><path d="M44.6 513.6 H51 M44.6 516.4 H54 M44.6 519.6 H49.4" stroke="#d3961b" stroke-width="1"/><path d="M51.6 519.4 L54 521.8 L58 517.4" fill="none" stroke="#d3961b" stroke-width="1.4"/><circle cx="24.9" cy="538" r="7.1" fill="#eef0f2" stroke="#b3bbc6" stroke-width="1.4"/><path d="M21.9 538 H27.9" stroke="#4b5468" stroke-width="1.6"/><path d="M24.9 535 V541" stroke="#4b5468" stroke-width="1.6"/><path d="M44.4 544.9 V532.3" stroke="#1a73c8" stroke-width="1.2"/><path d="M42.300000000000004 533.3 L44.4 529.5 L46.5 533.3 Z" fill="#1a73c8"/><path d="M45.7 543.9 L53.7 533.9" stroke="#f0504a" stroke-width="1.2"/><path d="M55.5 531.6999999999999 L54.900000000000006 535.9 L51.7 533.5 Z" fill="#f0504a"/><path d="M46.7 544.6999999999999 H56.7" stroke="#1e9e4a" stroke-width="1.2"/><path d="M56.1 542.5 L60.1 544.6999999999999 L56.1 546.9 Z" fill="#1e9e4a"/><rect x="44.1" y="544.3" width="1.8" height="1.8" fill="#555"/><text x="41.2" y="566.4" font-family="Liberation Serif,serif" font-style="italic" font-size="20.5" stroke="#111" stroke-width="0.35" fill="#111">f</text><text x="48.6" y="565.6" font-family="Liberation Sans,sans-serif" font-style="italic" font-weight="bold" font-size="9.6" fill="#d3961b" letter-spacing="-0.5">(x)</text><path d="M51.5 575.2 V588.8000000000001 M43 581.5 H58.8" stroke="#d3961b" stroke-width="1"/><rect x="42.65" y="574.85" width="16.5" height="14.299999999999999" fill="none" stroke="#111" stroke-width="1.3"/><circle cx="46.4" cy="612.2" r="2.7" fill="#ecedef" stroke="#111" stroke-width="1.7"/><path d="M51.85 614.10L54.15 614.10L53.90 615.48L55.60 616.10L56.30 614.88L58.06 616.36L56.98 617.26L57.89 618.82L59.20 618.34L59.60 620.60L58.20 620.60L57.89 622.38L59.20 622.86L58.06 624.84L56.98 623.94L55.60 625.10L56.30 626.32L54.15 627.10L53.90 625.72L52.10 625.72L51.85 627.10L49.70 626.32L50.40 625.10L49.02 623.94L47.94 624.84L46.80 622.86L48.11 622.38L47.80 620.60L46.40 620.60L46.80 618.34L48.11 618.82L49.02 617.26L47.94 616.36L49.70 614.88L50.40 616.10L52.10 615.48Z" fill="none" stroke="#d3961b" stroke-width="1.1" stroke-linejoin="round"/><circle cx="53" cy="620.6" r="2.4" fill="#d3961b"/><g transform="translate(41.6 630.4) scale(1.0)"><path d="M1 16.6 L3.2 17.8 L9.2 10.4 L8 9.2 Z" fill="#fdf3dc" stroke="#d3961b" stroke-width="0.9"/><path d="M2.2 15.6 L5 12.4" stroke="#111" stroke-width="1"/><path d="M9 9.4 L15.8 1.4 L17 2.4 L10.2 10.4 Z" fill="#fdf3dc" stroke="#d3961b" stroke-width="0.9"/><path d="M5.2 5.2 L13.6 13.4" stroke="#d3961b" stroke-width="2.6"/><path d="M5.2 5.2 L13.6 13.4" stroke="#fdf3dc" stroke-width="0.9"/><path d="M2.2 1.4 Q0.2 3.6 2 6 Q3.8 7.6 6 6.4 M5.8 0.6 Q7.8 2.4 6.6 5" fill="none" stroke="#d3961b" stroke-width="1.1"/><path d="M2.4 1.4 L4.4 3.4 L5.8 0.8" fill="none" stroke="#d3961b" stroke-width="1"/><path d="M12.4 12.8 Q11.4 15.2 13.4 17 Q15.6 18.4 17.4 16.6 M14.6 11.4 Q16.8 10.6 18 12.6" fill="none" stroke="#d3961b" stroke-width="1.1"/><path d="M17.4 16.4 L15.4 14.6 L17.8 12.8" fill="none" stroke="#d3961b" stroke-width="1"/></g><circle cx="24.9" cy="661" r="7.1" fill="#eef0f2" stroke="#b3bbc6" stroke-width="1.4"/><path d="M21.9 661 H27.9" stroke="#4b5468" stroke-width="1.6"/><path d="M24.9 658 V664" stroke="#4b5468" stroke-width="1.6"/><rect x="42.6" y="652.6" width="14.4" height="14.6" fill="#f2f3f5" stroke="#7a8698" stroke-width="1"/><rect x="45" y="655" width="15" height="15" fill="#fff" stroke="#7a8698" stroke-width="1"/><rect x="46.6" y="657.4" width="2" height="2" fill="#f01010"/><rect x="48.4" y="659" width="2" height="2" fill="#f01010"/><rect x="50.6" y="657.4" width="2" height="2" fill="#f01010"/><rect x="52.4" y="659.6" width="2" height="2" fill="#f01010"/><rect x="54.4" y="661.4" width="2" height="2" fill="#f01010"/><rect x="56.4" y="663.4" width="2" height="2" fill="#f01010"/><rect x="47" y="662" width="3" height="2" fill="#18b030"/><rect x="50" y="664" width="3.6" height="2" fill="#18b030"/><rect x="54" y="666.4" width="2.2" height="2" fill="#18b030"/><circle cx="24.9" cy="683" r="7.1" fill="#eef0f2" stroke="#b3bbc6" stroke-width="1.4"/><path d="M21.9 683 H27.9" stroke="#4b5468" stroke-width="1.6"/><path d="M24.9 680 V686" stroke="#4b5468" stroke-width="1.6"/><path d="M41.8 681.4 H44 M57.6 681.4 H60" stroke="#d3961b" stroke-width="1"/><circle cx="50.6" cy="681.6" r="5" fill="#ecedef" stroke="#111" stroke-width="1.9"/><rect x="49.2" y="680.2" width="2.8" height="2.8" fill="#d3961b"/><path d="M54.2 685.2 L59.2 690.4" stroke="#111" stroke-width="2"/><path d="M43 700.8 L47.4 697 H60 V708.4 L55.6 713 H43 Z" fill="#fff" stroke="#111" stroke-width="1.2" stroke-linejoin="round"/><rect x="49.4" y="701.2" width="5.8" height="5.6" fill="#d3961b"/><rect x="43.6" y="707" width="5.6" height="5.6" fill="#d3961b"/><path d="M55.6 707 L58 704.6 V710 L55.6 712.6 Z M58 698.6 L59.8 697.2 V702.6 L58 704.4 Z" fill="#d3961b"/><path d="M43 700.8 H55.6 V713 M55.6 700.8 L60 697 M49.3 700.8 V713 M43 706.9 H55.6 L60 702.8 M57.9 698.8 V710.6" fill="none" stroke="#111" stroke-width="1.1"/><g transform="translate(-1297.6 653.8)"><path d="M1339.1999999999998 71.6 V63.8 H1347.1999999999998 M1341.8 72.4 V66.4 H1347.8" fill="none" stroke="#111" stroke-width="1"/><path d="M1342.8 67.6 L1350.1999999999998 74" stroke="#d3961b" stroke-width="1.2"/><path d="M1342.0 70.2 V66.8 H1345.3999999999999" fill="none" stroke="#d3961b" stroke-width="1.2"/><path d="M1347.6 74.6 H1351.0 V71.2" fill="none" stroke="#d3961b" stroke-width="1.2"/><path d="M1349.8 74.6 h8.6 v8 h-8.6 Z M1352.7 74.6 v8 M1355.6 74.6 v8 M1349.8 77.3 h8.6 M1349.8 80.0 h8.6" fill="none" stroke="#d3961b" stroke-width="1"/><path d="M1349.8 74.6 L1346.2 72.19999999999999 V79.8 L1349.8 82.6 M1346.2 72.19999999999999 L1351.0 69.6 L1356.8 71.19999999999999 L1358.3999999999999 74.6" fill="none" stroke="#d3961b" stroke-width="1"/><path d="M1346.2 72.19999999999999 L1349.8 74.6 V82.6 L1346.2 79.8 Z" fill="#d3961b" opacity="0.45"/><path d="M1339.6 76.8 L1342.8 79 L1339.6 81.4 Z" fill="#111"/></g><path d="M45 743.6 L49.2 740 H58.6 V746.6 L54.4 750.8 H45 Z" fill="#d3961b"/><path d="M45 743.6 H54.4 V750.8 M54.4 743.6 L58.6 740" fill="none" stroke="#f2e2bd" stroke-width="0.8"/><text x="42.8" y="758.4" font-family="Liberation Sans,sans-serif" font-weight="bold" font-size="8.4" fill="#111" letter-spacing="0.4">t=0</text><circle cx="24.9" cy="769" r="7.1" fill="#eef0f2" stroke="#b3bbc6" stroke-width="1.4"/><path d="M21.9 769 H27.9" stroke="#4b5468" stroke-width="1.6"/><path d="M24.9 766 V772" stroke="#4b5468" stroke-width="1.6"/><path d="M47.43 763.49L49.37 763.49L49.16 764.67L50.60 765.19L51.20 764.15L52.69 765.40L51.77 766.17L52.53 767.50L53.66 767.08L54.00 769.00L52.80 769.00L52.53 770.50L53.66 770.92L52.69 772.60L51.77 771.83L50.60 772.81L51.20 773.85L49.37 774.51L49.16 773.33L47.64 773.33L47.43 774.51L45.60 773.85L46.20 772.81L45.03 771.83L44.11 772.60L43.14 770.92L44.27 770.50L44.00 769.00L42.80 769.00L43.14 767.08L44.27 767.50L45.03 766.17L44.11 765.40L45.60 764.15L46.20 765.19L47.64 764.67Z" fill="#d3961b" stroke="#d3961b" stroke-width="0.8" stroke-linejoin="round"/><path d="M45.8 769.2 L47.8 771.2 L51 767" fill="none" stroke="#111" stroke-width="1.2"/><circle cx="51" cy="790" r="8.6" fill="#f1f2f4" stroke="#111" stroke-width="0.9"/><path d="M47.2 787.8 H54.8 M47.2 792.2 H54.8" stroke="#d3961b" stroke-width="1.7"/><path d="M42.4 826.6 Q45 821.4 47.4 817.6 Q51.4 816.4 58.2 821.4 Q55.6 826.2 54.4 831.2 Q51.6 834 49.6 832 Z" fill="#d3961b" stroke="#111" stroke-width="0.7"/><circle cx="24.9" cy="845" r="7.1" fill="#eef0f2" stroke="#b3bbc6" stroke-width="1.4"/><path d="M21.9 845 H27.9" stroke="#4b5468" stroke-width="1.6"/><path d="M24.9 842 V848" stroke="#4b5468" stroke-width="1.6"/><path d="M48.2 839.8 A5.3 5.3 0 1 0 53.4 845.6 L48.2 845.4 Z" fill="#d3961b"/><path d="M49.4 839.6 L54 843.8 H49.4 Z" fill="#f4f4f4" stroke="#555" stroke-width="0.7"/><circle cx="24.9" cy="866" r="7.1" fill="#eef0f2" stroke="#b3bbc6" stroke-width="1.4"/><path d="M21.9 866 H27.9" stroke="#4b5468" stroke-width="1.6"/><path d="M24.9 863 V869" stroke="#4b5468" stroke-width="1.6"/><path d="M42.2 857 V874" stroke="#111" stroke-width="1.1"/><path d="M44 871.4 Q50 871.8 52 865 Q53.8 859.2 60 859.4" fill="none" stroke="#d3961b" stroke-width="1.2"/><circle cx="-0.8" cy="599" r="7.1" fill="#eef0f2" stroke="#b3bbc6" stroke-width="1.4"/><path d="M-3.8 599 H2.2" stroke="#4b5468" stroke-width="1.6"/><circle cx="-0.8" cy="807" r="7.1" fill="#eef0f2" stroke="#b3bbc6" stroke-width="1.4"/><path d="M-3.8 807 H2.2" stroke="#4b5468" stroke-width="1.6"/></svg>
<div class="a" style="left:278px;top:159px;width:383px;height:728px;background:#f4f4f4;border-left:1px solid #d0d0d0;border-right:1px solid #cfcfcf"></div>
<div class="a" style="left:278px;top:159px;width:383px;height:27px;background:#c0c5ce"></div>
<div class="tb " style="left:287px;top:163.14px;color:#5b6e8c;font-weight:normal;font-size:15px;transform:scaleX(0.964);">Task Page</div>
<svg style="left:648.5px;top:165px" width="10" height="12" viewBox="0 0 10 12"><path d="M7.6 2.2 L2.4 5.8 L7.6 9.6" fill="none" stroke="#222" stroke-width="1.3"/><path d="M1.6 1.2 H8" stroke="#999" stroke-width="0.6" stroke-dasharray="1 1"/></svg>
<div class="tb " style="left:290px;top:205.18px;color:#000;transform:scaleX(0.955);">Run Calculation</div>
<div class="a" style="left:619px;top:199px;width:28px;height:26px;border:1px solid #3e4858;border-radius:4px;background:#f8f8f8"></div>
<svg style="left:619px;top:199px" width="28" height="26" viewBox="0 0 28 26"><circle cx="14" cy="13" r="8.7" fill="none" stroke="#222" stroke-width="1.1"/><text x="14" y="18.2" text-anchor="middle" font-family="Liberation Sans,sans-serif" font-weight="bold" font-size="14.5" fill="#d3961b">?</text></svg>
<div class="grp" style="left:290px;top:235px;width:359px;height:40px"></div>
<div class="a" style="left:297px;top:241px;width:165px;height:27px;border:1px solid #3e4858;border-radius:4px;background:#f6f6f6"></div>
<div class="t tc" style="left:229.5px;width:300px;text-align:center;top:246.2px;transform:scaleX(0.815)">Check Case...</div>
<div class="a" style="left:477px;top:241px;width:165px;height:27px;border:1px solid #3e4858;border-radius:4px;background:#f6f6f6"></div>
<div class="t tc" style="left:409.5px;width:300px;text-align:center;top:246.2px;transform:scaleX(0.825)">Preview Mesh Motion...</div>
<div class="tb " style="left:290px;top:281.08px;color:#1f2a3c;transform:scaleX(0.973);">Time Advancement</div>
<div class="grp" style="left:290px;top:296px;width:359px;height:309px"></div>
<div class="t " style="left:295.2px;top:298.01px;transform:scaleX(0.848);">Type</div>
<div class="t " style="left:478.2px;top:298.01px;transform:scaleX(0.825);">Method</div>
<div class="inp" style="left:295.5px;top:318.5px;width:165.0px;height:22.0px"></div>
<div class="t " style="left:301.1px;top:320.41px;transform:scaleX(0.830);">Fixed</div>
<div class="arr" style="left:443.7px;top:326.9px;border-top-color:#111;border-left-width:4.2px;border-right-width:4.2px;border-top-width:5px"></div>
<div class="inp" style="left:478px;top:318.5px;width:165.5px;height:22.0px"></div>
<div class="t " style="left:483.6px;top:320.41px;transform:scaleX(0.821);">User-Specified</div>
<div class="arr" style="left:626.3px;top:326.9px;border-top-color:#111;border-left-width:4.2px;border-right-width:4.2px;border-top-width:5px"></div>
<div class="tb " style="left:295.2px;top:343.68px;color:#1f2a3c;transform:scaleX(0.922);">Parameters</div>
<div class="grp" style="left:295px;top:358.5px;width:349.5px;height:143.5px"></div>
<div class="t " style="left:300px;top:364.51px;transform:scaleX(0.832);">Number of Time Steps</div>
<div class="inp" style="left:300.5px;top:383px;width:154.0px;height:22px"></div>
<div class="t " style="left:306.5px;top:385.51px;">10</div>
<div class="a" style="left:442.7px;top:385.4px;width:0;height:0;border-left:4.2px solid transparent;border-right:4.2px solid transparent;border-bottom:5.6px solid #111"></div>
<div class="a" style="left:442.7px;top:396.4px;width:0;height:0;border-left:4.2px solid transparent;border-right:4.2px solid transparent;border-top:5.6px solid #111"></div>
<div class="t " style="left:472px;top:362.61px;transform:scaleX(0.817);">Time Step Size [s]</div>
<div class="inp" style="left:472.5px;top:383.5px;width:138px;height:26px"></div>
<div class="t " style="left:477.6px;top:387.01px;">0.001</div>
<div class="arr" style="left:621px;top:393.6px;border-top-color:#111;border-left-width:4.2px;border-right-width:4.2px;border-top-width:5px"></div>
<div class="t " style="left:300px;top:412.11px;transform:scaleX(0.818);">Max Iterations/Time Step</div>
<div class="inp" style="left:300.5px;top:429.5px;width:160.0px;height:22.0px"></div>
<div class="t " style="left:306.5px;top:432.01px;">20</div>
<div class="a" style="left:448.8px;top:431.9px;width:0;height:0;border-left:4.2px solid transparent;border-right:4.2px solid transparent;border-bottom:5.6px solid #111"></div>
<div class="a" style="left:448.8px;top:442.9px;width:0;height:0;border-left:4.2px solid transparent;border-right:4.2px solid transparent;border-top:5.6px solid #111"></div>
<div class="t " style="left:478.2px;top:414.11px;transform:scaleX(0.808);">Reporting Interval</div>
<div class="inp" style="left:478px;top:431.5px;width:160.5px;height:22.0px"></div>
<div class="t " style="left:484px;top:434.01px;">1</div>
<div class="a" style="left:626.8px;top:433.9px;width:0;height:0;border-left:4.2px solid transparent;border-right:4.2px solid transparent;border-bottom:5.6px solid #111"></div>
<div class="a" style="left:626.8px;top:444.9px;width:0;height:0;border-left:4.2px solid transparent;border-right:4.2px solid transparent;border-top:5.6px solid #111"></div>
<div class="t " style="left:300px;top:456.91px;transform:scaleX(0.810);">Profile Update Interval</div>
<div class="inp" style="left:300.5px;top:474.5px;width:160.0px;height:22.0px"></div>
<div class="t " style="left:306.5px;top:477.01px;">1</div>
<div class="a" style="left:448.8px;top:476.9px;width:0;height:0;border-left:4.2px solid transparent;border-right:4.2px solid transparent;border-bottom:5.6px solid #111"></div>
<div class="a" style="left:448.8px;top:487.9px;width:0;height:0;border-left:4.2px solid transparent;border-right:4.2px solid transparent;border-top:5.6px solid #111"></div>
<div class="tb " style="left:295px;top:504.88px;color:#1f2a3c;transform:scaleX(0.960);">Options</div>
<div class="grp" style="left:295px;top:519.5px;width:349.5px;height:81.0px"></div>
<div class="cb" style="left:302px;top:526.5px"></div>
<div class="t " style="left:325.7px;top:525.51px;transform:scaleX(0.812);">Extrapolate Variables</div>
<div class="cb" style="left:302px;top:551.5px"></div>
<div class="t " style="left:325.7px;top:550.41px;transform:scaleX(0.816);">Report Simulation Status</div>
<div class="cb" style="left:302px;top:576.5px"></div>
<div class="t " style="left:325.7px;top:575.41px;transform:scaleX(0.822);">Specify Solid Time Step Size</div>
<div class="tb " style="left:290px;top:610.48px;color:#1f2a3c;transform:scaleX(1.003);">Solution Processing</div>
<div class="grp" style="left:290px;top:626px;width:359px;height:88.5px"></div>
<div class="tb " style="left:295px;top:628.68px;color:#1f2a3c;transform:scaleX(0.983);">Statistics</div>
<div class="grp" style="left:295px;top:643px;width:349.5px;height:31px"></div>
<div class="cb" style="left:302px;top:650px"></div>
<div class="t " style="left:325.7px;top:649.31px;transform:scaleX(0.819);">Data Sampling for Time Statistics</div>
<div class="a" style="left:297px;top:680px;width:345px;height:27px;border:1px solid #3e4858;border-radius:4px;background:#f6f6f6"></div>
<div class="t tc" style="left:319.5px;width:300px;text-align:center;top:685.2px;transform:scaleX(0.811)">Data File Quantities...</div>
<div class="tb " style="left:290px;top:719.88px;color:#1f2a3c;transform:scaleX(0.978);">Solution Advancement</div>
<div class="grp" style="left:290px;top:734.5px;width:359px;height:54.0px"></div>
<div class="a" style="left:297px;top:754px;width:345px;height:27px;border:1px solid #3e4858;border-radius:4px;background:#f6f6f6"></div>
<div class="t tc" style="left:319.5px;width:300px;text-align:center;top:759.2px;transform:scaleX(0.804)">Calculate</div>
<svg style="left:0;top:0" width="1505" height="887" viewBox="0 0 1505 887"><defs><linearGradient id="bg" x1="0" y1="159" x2="0" y2="632" gradientUnits="userSpaceOnUse"><stop offset="0" stop-color="#cad0e1"/><stop offset="0.25" stop-color="#d5daE8"/><stop offset="0.55" stop-color="#e6e9f1"/><stop offset="0.85" stop-color="#f8f9fb"/><stop offset="1" stop-color="#ffffff"/></linearGradient><linearGradient id="cyl" x1="0" y1="0" x2="1" y2="0"><stop offset="0" stop-color="#5f5f5f"/><stop offset="0.12" stop-color="#7d7d7d"/><stop offset="0.38" stop-color="#a3a3a3"/><stop offset="0.7" stop-color="#8c8c8c"/><stop offset="1" stop-color="#6e6e6e"/></linearGradient><linearGradient id="ghost" x1="0" y1="0" x2="1" y2="0"><stop offset="0" stop-color="#c6c6c3"/><stop offset="0.18" stop-color="#e2e2e2"/><stop offset="0.45" stop-color="#f3f3f3"/><stop offset="0.8" stop-color="#dedede"/><stop offset="1" stop-color="#cbcbc8"/></linearGradient><linearGradient id="gfade" x1="0" y1="0" x2="0" y2="1"><stop offset="0" stop-color="#4a4a40" stop-opacity="0.5"/><stop offset="0.14" stop-color="#55554a" stop-opacity="0.4"/><stop offset="0.26" stop-color="#77776c" stop-opacity="0.2"/><stop offset="0.4" stop-color="#999" stop-opacity="0.03"/><stop offset="1" stop-color="#fff" stop-opacity="0.3"/></linearGradient><linearGradient id="cap" x1="0" y1="0" x2="1" y2="1"><stop offset="0" stop-color="#b4ae22"/><stop offset="1" stop-color="#d2cb3c"/></linearGradient><linearGradient id="gl" x1="0" y1="188" x2="0" y2="630" gradientUnits="userSpaceOnUse"><stop offset="0" stop-color="#c9c4b8" stop-opacity="0.75"/><stop offset="0.5" stop-color="#bdbab2" stop-opacity="0.8"/><stop offset="1" stop-color="#b4b4b4" stop-opacity="0.85"/></linearGradient><clipPath id="vpclip"><path d="M727 159.5 H1505 V632 H715 V188 Z"/></clipPath><clipPath id="gridclip"><rect x="715" y="188" width="790" height="442"/></clipPath><filter id="blur2" x="-20%" y="-20%" width="140%" height="140%"><feGaussianBlur stdDeviation="2.2"/></filter></defs><path d="M727 159.5 H1505 V640 H715 V188 Z" fill="url(#bg)"/><path d="M706.2 214.6L768.0 183.7M687.9 274.4L877.5 173.7M669.4 338.0L988.5 163.1M651.2 407.0L1097.8 151.6M632.9 477.8L1207.8 139.8M614.6 559.0L1317.3 126.3M606.1 640.3L1426.6 112.7M612.7 718.1L1531.9 99.8M741.1 718.1L1618.4 99.8M885.2 706.6L1608.3 169.2M1031.6 691.2L1583.9 261.6M1177.5 674.8L1559.6 359.9M1325.0 655.5L1535.0 475.7M1470.8 634.8L1510.7 600.0M1426.2 180.9L1518.1 231.2M1316.0 170.1L1536.5 296.0M1206.7 159.0L1554.7 362.6M1096.3 146.1L1573.1 440.0M986.2 132.9L1591.5 519.2M876.9 118.0L1609.7 608.7M765.8 101.9L1628.2 705.2M677.9 99.8L1517.8 718.1M603.2 106.4L1385.8 717.0M627.6 199.2L1239.4 701.6M651.7 298.0L1094.6 685.1M676.3 412.7L947.1 666.0M700.4 543.6L802.8 644.2" fill="none" stroke="url(#gl)" stroke-width="1" clip-path="url(#gridclip)"/><path d="M715.4 187.5 L724.6 163.4 Q726 159.6 729.6 159.6 H1505" fill="none" stroke="#1e2938" stroke-width="1.1"/><rect x="727" y="163" width="20" height="20" fill="#000"/><path d="M728.8 170.2 Q731 167.8 735 168.4 Q740 169.4 743.4 173.4 Q745.4 175.2 745.2 171.8 Q744.6 167 741.6 165.2 M731.6 172.6 Q737 175.2 741.8 176 Q744.4 176 745.2 173 M734.6 166.4 Q740 165 743.6 167.6 M737.4 167.6 Q741 167.2 744.4 170" fill="none" stroke="#e9a91c" stroke-width="1.15" stroke-linecap="round"/><text x="734.8" y="182.6" font-family="Liberation Sans,sans-serif" font-weight="bold" font-size="6.4" fill="#fff">F</text><path d="M979.5 429.8 L1209 614.5 L1213 622.0 L979.5 435.2 Z" fill="#cbcdc3"/><path d="M1294.9 490.5 L1292.4 550.8 A8.7 3.7 0 0 0 1309.8 550.8 L1312.3 490.5 Z" fill="url(#ghost)"/><path d="M1294.9 490.5 L1292.4 550.8 A8.7 3.7 0 0 0 1309.8 550.8 L1312.3 490.5 Z" fill="url(#gfade)"/><path d="M1278.4 504.0 L1276.4 563.7 A8.7 3.7 0 0 0 1293.8 563.7 L1295.8 504.0 Z" fill="url(#ghost)"/><path d="M1278.4 504.0 L1276.4 563.7 A8.7 3.7 0 0 0 1293.8 563.7 L1295.8 504.0 Z" fill="url(#gfade)"/><path d="M1262.4 517.2 L1260.9 575.9 A9.0 3.8 0 0 0 1278.9 575.9 L1280.4 517.2 Z" fill="url(#ghost)"/><path d="M1262.4 517.2 L1260.9 575.9 A9.0 3.8 0 0 0 1278.9 575.9 L1280.4 517.2 Z" fill="url(#gfade)"/><path d="M1246.4 530.0 L1245.4 588.1 A9.3 3.9 0 0 0 1264.0 588.1 L1265.0 530.0 Z" fill="url(#ghost)"/><path d="M1246.4 530.0 L1245.4 588.1 A9.3 3.9 0 0 0 1264.0 588.1 L1265.0 530.0 Z" fill="url(#gfade)"/><path d="M1229.1 544.0 L1228.6 601.0 A9.9 4.2 0 0 0 1248.4 601.0 L1248.9 544.0 Z" fill="url(#ghost)"/><path d="M1229.1 544.0 L1228.6 601.0 A9.9 4.2 0 0 0 1248.4 601.0 L1248.9 544.0 Z" fill="url(#gfade)"/><path d="M975.5 377.4 L982.7 439.0 A7.5 3.3 0 0 0 997.8 439.0 L990.6 377.4 Z" fill="url(#ghost)"/><path d="M975.5 377.4 L982.7 439.0 A7.5 3.3 0 0 0 997.8 439.0 L990.6 377.4 Z" fill="url(#gfade)"/><path d="M990.0 388.9 L996.8 450.4 A7.8 3.4 0 0 0 1012.3 450.4 L1005.5 388.9 Z" fill="url(#ghost)"/><path d="M990.0 388.9 L996.8 450.4 A7.8 3.4 0 0 0 1012.3 450.4 L1005.5 388.9 Z" fill="url(#gfade)"/><path d="M1004.7 400.6 L1011.0 461.8 A8.0 3.5 0 0 0 1027.0 461.8 L1020.7 400.6 Z" fill="url(#ghost)"/><path d="M1004.7 400.6 L1011.0 461.8 A8.0 3.5 0 0 0 1027.0 461.8 L1020.7 400.6 Z" fill="url(#gfade)"/><path d="M1019.6 412.4 L1025.4 473.4 A8.2 3.6 0 0 0 1041.8 473.4 L1035.9 412.4 Z" fill="url(#ghost)"/><path d="M1019.6 412.4 L1025.4 473.4 A8.2 3.6 0 0 0 1041.8 473.4 L1035.9 412.4 Z" fill="url(#gfade)"/><path d="M1034.6 424.3 L1040.0 485.0 A8.4 3.7 0 0 0 1056.7 485.0 L1051.3 424.3 Z" fill="url(#ghost)"/><path d="M1034.6 424.3 L1040.0 485.0 A8.4 3.7 0 0 0 1056.7 485.0 L1051.3 424.3 Z" fill="url(#gfade)"/><path d="M1049.7 436.4 L1054.7 496.8 A8.6 3.8 0 0 0 1071.8 496.8 L1066.9 436.4 Z" fill="url(#ghost)"/><path d="M1049.7 436.4 L1054.7 496.8 A8.6 3.8 0 0 0 1071.8 496.8 L1066.9 436.4 Z" fill="url(#gfade)"/><path d="M1065.0 448.5 L1069.5 508.7 A8.8 3.9 0 0 0 1087.1 508.7 L1082.6 448.5 Z" fill="url(#ghost)"/><path d="M1065.0 448.5 L1069.5 508.7 A8.8 3.9 0 0 0 1087.1 508.7 L1082.6 448.5 Z" fill="url(#gfade)"/><path d="M1080.4 460.8 L1084.5 520.7 A9.0 4.0 0 0 0 1102.4 520.7 L1098.4 460.8 Z" fill="url(#ghost)"/><path d="M1080.4 460.8 L1084.5 520.7 A9.0 4.0 0 0 0 1102.4 520.7 L1098.4 460.8 Z" fill="url(#gfade)"/><path d="M1096.0 473.2 L1099.6 532.8 A9.2 4.1 0 0 0 1118.0 532.8 L1114.4 473.2 Z" fill="url(#ghost)"/><path d="M1096.0 473.2 L1099.6 532.8 A9.2 4.1 0 0 0 1118.0 532.8 L1114.4 473.2 Z" fill="url(#gfade)"/><path d="M1111.7 485.7 L1114.8 545.0 A9.4 4.1 0 0 0 1133.6 545.0 L1130.5 485.7 Z" fill="url(#ghost)"/><path d="M1111.7 485.7 L1114.8 545.0 A9.4 4.1 0 0 0 1133.6 545.0 L1130.5 485.7 Z" fill="url(#gfade)"/><path d="M1127.6 498.3 L1130.2 557.3 A9.6 4.2 0 0 0 1149.4 557.3 L1146.8 498.3 Z" fill="url(#ghost)"/><path d="M1127.6 498.3 L1130.2 557.3 A9.6 4.2 0 0 0 1149.4 557.3 L1146.8 498.3 Z" fill="url(#gfade)"/><path d="M1143.6 511.1 L1145.7 569.7 A9.8 4.3 0 0 0 1165.3 569.7 L1163.2 511.1 Z" fill="url(#ghost)"/><path d="M1143.6 511.1 L1145.7 569.7 A9.8 4.3 0 0 0 1165.3 569.7 L1163.2 511.1 Z" fill="url(#gfade)"/><path d="M1159.8 523.9 L1161.4 582.3 A10.0 4.4 0 0 0 1181.4 582.3 L1179.8 523.9 Z" fill="url(#ghost)"/><path d="M1159.8 523.9 L1161.4 582.3 A10.0 4.4 0 0 0 1181.4 582.3 L1179.8 523.9 Z" fill="url(#gfade)"/><path d="M1176.1 536.9 L1177.2 594.9 A10.2 4.5 0 0 0 1197.6 594.9 L1196.5 536.9 Z" fill="url(#ghost)"/><path d="M1176.1 536.9 L1177.2 594.9 A10.2 4.5 0 0 0 1197.6 594.9 L1196.5 536.9 Z" fill="url(#gfade)"/><path d="M1192.5 550.0 L1193.1 607.7 A10.4 4.6 0 0 0 1214.0 607.7 L1213.4 550.0 Z" fill="url(#ghost)"/><path d="M1192.5 550.0 L1193.1 607.7 A10.4 4.6 0 0 0 1214.0 607.7 L1213.4 550.0 Z" fill="url(#gfade)"/><path d="M1208.4 559.7 L1208.5 615.9 A11.4 4.8 0 0 0 1231.2 615.9 L1231.1 559.7 Z" fill="url(#ghost)"/><path d="M1208.4 559.7 L1208.5 615.9 A11.4 4.8 0 0 0 1231.2 615.9 L1231.1 559.7 Z" fill="url(#gfade)"/><path d="M983.1 381.9 L997.9 393.4 L1012.8 405.1 L1027.8 416.9 L1043.0 428.8 L1058.4 440.9 L1073.9 453.0 L1089.5 465.3 L1105.3 477.7 L1121.2 490.2 L1137.3 502.8 L1153.5 515.6 L1169.8 528.4 L1186.3 541.4 L1203.0 554.5 L1219.8 564.2 L1239.0 548.5 L1255.7 534.5 L1271.4 521.7 L1287.1 508.5 L1303.6 495.0" fill="none" stroke="#77776c" stroke-opacity="0.5" stroke-width="6" filter="url(#blur2)"/><ellipse cx="1066.5" cy="274.4" rx="8.0" ry="5.3" fill="url(#cap)"/><ellipse cx="1081.8" cy="285.0" rx="8.1" ry="5.3" fill="url(#cap)"/><ellipse cx="1097.1" cy="295.6" rx="8.1" ry="5.4" fill="url(#cap)"/><ellipse cx="1112.4" cy="306.2" rx="8.2" ry="5.4" fill="url(#cap)"/><ellipse cx="1127.6" cy="316.8" rx="8.3" ry="5.5" fill="url(#cap)"/><ellipse cx="1142.9" cy="327.4" rx="8.3" ry="5.5" fill="url(#cap)"/><ellipse cx="1158.2" cy="338.0" rx="8.4" ry="5.6" fill="url(#cap)"/><ellipse cx="1173.5" cy="348.6" rx="8.5" ry="5.6" fill="url(#cap)"/><ellipse cx="1188.8" cy="359.3" rx="8.6" ry="5.6" fill="url(#cap)"/><ellipse cx="1204.0" cy="369.9" rx="8.6" ry="5.7" fill="url(#cap)"/><ellipse cx="1219.3" cy="380.5" rx="8.7" ry="5.7" fill="url(#cap)"/><ellipse cx="1234.6" cy="391.1" rx="8.8" ry="5.8" fill="url(#cap)"/><ellipse cx="1249.9" cy="401.7" rx="8.8" ry="5.8" fill="url(#cap)"/><ellipse cx="1265.2" cy="412.3" rx="8.9" ry="5.9" fill="url(#cap)"/><ellipse cx="1280.5" cy="422.9" rx="9.0" ry="5.9" fill="url(#cap)"/><ellipse cx="1295.7" cy="433.5" rx="9.1" ry="6.0" fill="url(#cap)"/><path d="M969.9 329.5 L1211.9 509.2 L1302.7 441.0 L1299.7 489.0 L1217.9 558.2 L975.9 371.5 Z" fill="#6c6c6a"/><path d="M1296.8 441.0 L1294.7 491.5 A8.9 4.6 0 0 0 1312.5 491.5 L1314.6 441.0 Z" fill="url(#cyl)"/><path d="M1295.1 491.5 A8.9 4.6 0 0 0 1312.1 491.5" fill="none" stroke="#bdb83a" stroke-width="0.6" stroke-opacity="0.75"/><ellipse cx="1305.7" cy="441.0" rx="8.9" ry="5.5" fill="url(#cap)"/><path d="M1279.9 454.5 L1278.2 505.0 A8.9 4.6 0 0 0 1296.0 505.0 L1297.7 454.5 Z" fill="url(#cyl)"/><path d="M1278.6 505.0 A8.9 4.6 0 0 0 1295.6 505.0" fill="none" stroke="#bdb83a" stroke-width="0.6" stroke-opacity="0.75"/><ellipse cx="1288.8" cy="454.5" rx="8.9" ry="5.5" fill="url(#cap)"/><path d="M1263.5 467.5 L1262.2 518.2 A9.2 4.8 0 0 0 1280.6 518.2 L1281.9 467.5 Z" fill="url(#cyl)"/><path d="M1262.6 518.2 A9.2 4.8 0 0 0 1280.2 518.2" fill="none" stroke="#bdb83a" stroke-width="0.6" stroke-opacity="0.75"/><ellipse cx="1272.7" cy="467.5" rx="9.2" ry="5.7" fill="url(#cap)"/><path d="M1247.1 480.0 L1246.2 531.0 A9.5 4.9 0 0 0 1265.2 531.0 L1266.1 480.0 Z" fill="url(#cyl)"/><path d="M1246.6 531.0 A9.5 4.9 0 0 0 1264.8 531.0" fill="none" stroke="#bdb83a" stroke-width="0.6" stroke-opacity="0.75"/><ellipse cx="1256.6" cy="480.0" rx="9.5" ry="5.9" fill="url(#cap)"/><path d="M1229.4 493.5 L1228.9 545.0 A10.1 5.2 0 0 0 1249.1 545.0 L1249.6 493.5 Z" fill="url(#cyl)"/><path d="M1229.3 545.0 A10.1 5.2 0 0 0 1248.7 545.0" fill="none" stroke="#bdb83a" stroke-width="0.6" stroke-opacity="0.75"/><ellipse cx="1239.5" cy="493.5" rx="10.1" ry="6.3" fill="url(#cap)"/><path d="M969.7 328.9 L975.4 378.4 A7.7 4.2 0 0 0 990.8 378.4 L985.1 328.9 Z" fill="url(#cyl)"/><path d="M975.8 378.4 A7.7 4.2 0 0 0 990.4 378.4" fill="none" stroke="#bdb83a" stroke-width="0.6" stroke-opacity="0.75"/><path d="M984.5 340.0 L990.0 389.9 A7.9 4.3 0 0 0 1005.8 389.9 L1000.3 340.0 Z" fill="url(#cyl)"/><path d="M990.4 389.9 A7.9 4.3 0 0 0 1005.4 389.9" fill="none" stroke="#bdb83a" stroke-width="0.6" stroke-opacity="0.75"/><path d="M999.5 351.2 L1004.7 401.6 A8.1 4.4 0 0 0 1020.9 401.6 L1015.7 351.2 Z" fill="url(#cyl)"/><path d="M1005.1 401.6 A8.1 4.4 0 0 0 1020.5 401.6" fill="none" stroke="#bdb83a" stroke-width="0.6" stroke-opacity="0.75"/><path d="M1014.6 362.6 L1019.5 413.4 A8.3 4.5 0 0 0 1036.2 413.4 L1031.3 362.6 Z" fill="url(#cyl)"/><path d="M1019.9 413.4 A8.3 4.5 0 0 0 1035.8 413.4" fill="none" stroke="#bdb83a" stroke-width="0.6" stroke-opacity="0.75"/><path d="M1029.9 374.0 L1034.5 425.3 A8.5 4.6 0 0 0 1051.6 425.3 L1047.0 374.0 Z" fill="url(#cyl)"/><path d="M1034.9 425.3 A8.5 4.6 0 0 0 1051.2 425.3" fill="none" stroke="#bdb83a" stroke-width="0.6" stroke-opacity="0.75"/><path d="M1045.4 385.6 L1049.6 437.4 A8.8 4.7 0 0 0 1067.1 437.4 L1062.9 385.6 Z" fill="url(#cyl)"/><path d="M1050.0 437.4 A8.8 4.7 0 0 0 1066.7 437.4" fill="none" stroke="#bdb83a" stroke-width="0.6" stroke-opacity="0.75"/><path d="M1061.0 397.3 L1064.9 449.5 A9.0 4.8 0 0 0 1082.8 449.5 L1078.9 397.3 Z" fill="url(#cyl)"/><path d="M1065.3 449.5 A9.0 4.8 0 0 0 1082.4 449.5" fill="none" stroke="#bdb83a" stroke-width="0.6" stroke-opacity="0.75"/><path d="M1076.8 409.1 L1080.3 461.8 A9.2 5.0 0 0 0 1098.7 461.8 L1095.1 409.1 Z" fill="url(#cyl)"/><path d="M1080.7 461.8 A9.2 5.0 0 0 0 1098.3 461.8" fill="none" stroke="#bdb83a" stroke-width="0.6" stroke-opacity="0.75"/><path d="M1092.7 421.1 L1095.9 474.2 A9.4 5.1 0 0 0 1114.7 474.2 L1111.5 421.1 Z" fill="url(#cyl)"/><path d="M1096.3 474.2 A9.4 5.1 0 0 0 1114.3 474.2" fill="none" stroke="#bdb83a" stroke-width="0.6" stroke-opacity="0.75"/><path d="M1108.8 433.1 L1111.6 486.7 A9.6 5.2 0 0 0 1130.8 486.7 L1128.0 433.1 Z" fill="url(#cyl)"/><path d="M1112.0 486.7 A9.6 5.2 0 0 0 1130.4 486.7" fill="none" stroke="#bdb83a" stroke-width="0.6" stroke-opacity="0.75"/><path d="M1125.1 445.3 L1127.5 499.3 A9.8 5.3 0 0 0 1147.1 499.3 L1144.7 445.3 Z" fill="url(#cyl)"/><path d="M1127.9 499.3 A9.8 5.3 0 0 0 1146.7 499.3" fill="none" stroke="#bdb83a" stroke-width="0.6" stroke-opacity="0.75"/><path d="M1141.5 457.6 L1143.5 512.1 A10.0 5.4 0 0 0 1163.5 512.1 L1161.5 457.6 Z" fill="url(#cyl)"/><path d="M1143.9 512.1 A10.0 5.4 0 0 0 1163.1 512.1" fill="none" stroke="#bdb83a" stroke-width="0.6" stroke-opacity="0.75"/><path d="M1158.1 470.0 L1159.6 524.9 A10.2 5.5 0 0 0 1180.1 524.9 L1178.5 470.0 Z" fill="url(#cyl)"/><path d="M1160.0 524.9 A10.2 5.5 0 0 0 1179.7 524.9" fill="none" stroke="#bdb83a" stroke-width="0.6" stroke-opacity="0.75"/><path d="M1174.9 482.6 L1175.9 537.9 A10.4 5.6 0 0 0 1196.8 537.9 L1195.7 482.6 Z" fill="url(#cyl)"/><path d="M1176.3 537.9 A10.4 5.6 0 0 0 1196.4 537.9" fill="none" stroke="#bdb83a" stroke-width="0.6" stroke-opacity="0.75"/><path d="M1191.8 495.2 L1192.3 551.0 A10.6 5.7 0 0 0 1213.6 551.0 L1213.0 495.2 Z" fill="url(#cyl)"/><path d="M1192.7 551.0 A10.6 5.7 0 0 0 1213.2 551.0" fill="none" stroke="#bdb83a" stroke-width="0.6" stroke-opacity="0.75"/><path d="M1208.1 508.0 L1208.2 560.7 A11.6 6.0 0 0 0 1231.4 560.7 L1231.3 508.0 Z" fill="url(#cyl)"/><path d="M1208.6 560.7 A11.6 6.0 0 0 0 1231.0 560.7" fill="none" stroke="#bdb83a" stroke-width="0.6" stroke-opacity="0.75"/><ellipse cx="1219.7" cy="508.0" rx="11.6" ry="7.2" fill="url(#cap)"/><path d="M966.9 327.5 L1059.2 271.2 L1303.7 441.0 L1211.9 509.2 Z" fill="#8d8d8d"/><path d="M966.9 327.5 L1211.9 509.2" stroke="#c9c23a" stroke-opacity="0.55" stroke-width="0.7"/><path d="M1211.9 509.2 L1303.7 441.0" stroke="#b4b4b4" stroke-opacity="0.85" stroke-width="0.9"/></svg>
<div class="tb tc " style="left:1040.6px;width:300px;text-align:center;top:165.88px;color:#1c2430">Mesh</div>
<svg style="left:0;top:0" width="720" height="670" viewBox="0 0 720 670"><rect x="683.0" y="165.0" width="1" height="1" fill="#bdbdbd"/><rect x="686.1" y="165.0" width="1" height="1" fill="#bdbdbd"/><rect x="689.2" y="165.0" width="1" height="1" fill="#bdbdbd"/><rect x="692.3" y="165.0" width="1" height="1" fill="#bdbdbd"/><rect x="695.4" y="165.0" width="1" height="1" fill="#bdbdbd"/><rect x="698.5" y="165.0" width="1" height="1" fill="#bdbdbd"/><rect x="683.0" y="167.9" width="1" height="1" fill="#bdbdbd"/><rect x="686.1" y="167.9" width="1" height="1" fill="#bdbdbd"/><rect x="689.2" y="167.9" width="1" height="1" fill="#bdbdbd"/><rect x="692.3" y="167.9" width="1" height="1" fill="#bdbdbd"/><rect x="695.4" y="167.9" width="1" height="1" fill="#bdbdbd"/><rect x="698.5" y="167.9" width="1" height="1" fill="#bdbdbd"/><rect x="683.0" y="271.0" width="1" height="1" fill="#bdbdbd"/><rect x="686.1" y="271.0" width="1" height="1" fill="#bdbdbd"/><rect x="689.2" y="271.0" width="1" height="1" fill="#bdbdbd"/><rect x="692.3" y="271.0" width="1" height="1" fill="#bdbdbd"/><rect x="695.4" y="271.0" width="1" height="1" fill="#bdbdbd"/><rect x="698.5" y="271.0" width="1" height="1" fill="#bdbdbd"/><rect x="683.0" y="273.9" width="1" height="1" fill="#bdbdbd"/><rect x="686.1" y="273.9" width="1" height="1" fill="#bdbdbd"/><rect x="689.2" y="273.9" width="1" height="1" fill="#bdbdbd"/><rect x="692.3" y="273.9" width="1" height="1" fill="#bdbdbd"/><rect x="695.4" y="273.9" width="1" height="1" fill="#bdbdbd"/><rect x="698.5" y="273.9" width="1" height="1" fill="#bdbdbd"/><rect x="683.0" y="553.0" width="1" height="1" fill="#bdbdbd"/><rect x="686.1" y="553.0" width="1" height="1" fill="#bdbdbd"/><rect x="689.2" y="553.0" width="1" height="1" fill="#bdbdbd"/><rect x="692.3" y="553.0" width="1" height="1" fill="#bdbdbd"/><rect x="695.4" y="553.0" width="1" height="1" fill="#bdbdbd"/><rect x="698.5" y="553.0" width="1" height="1" fill="#bdbdbd"/><rect x="683.0" y="555.9" width="1" height="1" fill="#bdbdbd"/><rect x="686.1" y="555.9" width="1" height="1" fill="#bdbdbd"/><rect x="689.2" y="555.9" width="1" height="1" fill="#bdbdbd"/><rect x="692.3" y="555.9" width="1" height="1" fill="#bdbdbd"/><rect x="695.4" y="555.9" width="1" height="1" fill="#bdbdbd"/><rect x="698.5" y="555.9" width="1" height="1" fill="#bdbdbd"/><rect x="670.4" y="637.6" width="0.9" height="0.9" fill="#b5b5b5"/><rect x="673.0" y="637.6" width="0.9" height="0.9" fill="#b5b5b5"/><rect x="670.4" y="639.8" width="0.9" height="0.9" fill="#b5b5b5"/><rect x="673.0" y="639.8" width="0.9" height="0.9" fill="#b5b5b5"/><rect x="670.4" y="642.0" width="0.9" height="0.9" fill="#b5b5b5"/><rect x="673.0" y="642.0" width="0.9" height="0.9" fill="#b5b5b5"/><rect x="670.4" y="644.2" width="0.9" height="0.9" fill="#b5b5b5"/><rect x="673.0" y="644.2" width="0.9" height="0.9" fill="#b5b5b5"/><rect x="670.4" y="646.4" width="0.9" height="0.9" fill="#b5b5b5"/><rect x="673.0" y="646.4" width="0.9" height="0.9" fill="#b5b5b5"/><rect x="670.4" y="648.6" width="0.9" height="0.9" fill="#b5b5b5"/><rect x="673.0" y="648.6" width="0.9" height="0.9" fill="#b5b5b5"/><rect x="670.4" y="650.8" width="0.9" height="0.9" fill="#b5b5b5"/><rect x="673.0" y="650.8" width="0.9" height="0.9" fill="#b5b5b5"/><rect x="670.4" y="653.0" width="0.9" height="0.9" fill="#b5b5b5"/><rect x="673.0" y="653.0" width="0.9" height="0.9" fill="#b5b5b5"/><rect x="670.5" y="176.5" width="38" height="38" rx="4" fill="#fff" stroke="#a9b3c4" stroke-width="1"/><rect x="670.5" y="220.5" width="38" height="38" rx="4" fill="#fff" stroke="#a9b3c4" stroke-width="1"/><rect x="671" y="283" width="37" height="37" rx="3.5" fill="#fff" stroke="#9aa4b4" stroke-width="2.2"/><rect x="670.5" y="326.5" width="38" height="38" rx="4" fill="#fff" stroke="#a9b3c4" stroke-width="1"/><rect x="670.5" y="370.5" width="38" height="38" rx="4" fill="#fff" stroke="#a9b3c4" stroke-width="1"/><rect x="670.5" y="414.5" width="38" height="38" rx="4" fill="#fff" stroke="#a9b3c4" stroke-width="1"/><rect x="670.5" y="458.5" width="38" height="38" rx="4" fill="#fff" stroke="#a9b3c4" stroke-width="1"/><rect x="670.5" y="502.5" width="38" height="38" rx="4" fill="#fff" stroke="#a9b3c4" stroke-width="1"/><rect x="670.5" y="564.5" width="38" height="38" rx="4" fill="#fff" stroke="#a9b3c4" stroke-width="1"/><rect x="670.5" y="614.5" width="38" height="10" rx="4" fill="#fff" stroke="#a9b3c4" stroke-width="1"/><path d="M688 617.4 L689.6 619 L691.2 617.4 M688 620 L689.6 621.6 L691.2 620" fill="none" stroke="#666" stroke-width="0.8"/><circle cx="689.5" cy="195.5" r="10.6" fill="#fffaf0" stroke="#d3961b" stroke-width="1.2"/><path d="M689.5 195.5L686.8 198.5M689.5 195.5L692.2 192.5M689.5 195.5L690.8 199.3M689.5 195.5L688.2 191.7M689.5 195.5L693.4 196.3M693.4 196.3L696.0 199.1M693.4 196.3L696.9 194.6M693.4 196.3L692.2 192.5M693.4 196.3L690.8 199.3M690.8 199.3L692.7 202.2M690.8 199.3L686.8 198.5M690.8 199.3L688.1 202.8M686.8 198.5L684.1 200.6M686.8 198.5L685.6 194.7M686.8 198.5L688.1 202.8M685.6 194.7L683.0 191.9M685.6 194.7L682.1 196.4M685.6 194.7L688.2 191.7M688.2 191.7L686.3 188.8M688.2 191.7L692.2 192.5M688.2 191.7L690.9 188.2M692.2 192.5L694.9 190.4M692.2 192.5L690.9 188.2M696.0 199.1L698.2 200.8M696.0 199.1L699.6 196.5M696.0 199.1L696.9 194.6M696.0 199.1L692.7 202.2M692.7 202.2L695.0 204.0M692.7 202.2L690.8 205.6M692.7 202.2L688.1 202.8M688.1 202.8L686.3 205.1M688.1 202.8L690.8 205.6M684.1 200.6L682.4 202.8M684.1 200.6L679.9 199.0M684.1 200.6L682.1 196.4M682.1 196.4L679.9 199.0M682.1 196.4L679.4 194.5M682.1 196.4L683.0 191.9M683.0 191.9L680.8 190.2M683.0 191.9L679.4 194.5M683.0 191.9L686.3 188.8M686.3 188.8L684.0 187.0M686.3 188.8L688.2 185.4M686.3 188.8L690.9 188.2M690.9 188.2L692.7 185.9M690.9 188.2L688.2 185.4M694.9 190.4L696.6 188.2M694.9 190.4L699.1 192.0M694.9 190.4L696.9 194.6M696.9 194.6L699.1 192.0M696.9 194.6L699.6 196.5M699.6 196.5L699.1 192.0M699.6 196.5L698.2 200.8M698.2 200.8L695.0 204.0M695.0 204.0L690.8 205.6M690.8 205.6L686.3 205.1M686.3 205.1L682.4 202.8M682.4 202.8L679.9 199.0M679.9 199.0L679.4 194.5M679.4 194.5L680.8 190.2M680.8 190.2L684.0 187.0M684.0 187.0L688.2 185.4M688.2 185.4L692.7 185.9M692.7 185.9L696.6 188.2M696.6 188.2L699.1 192.0" stroke="#d3961b" stroke-width="0.75" fill="none"/><g transform="translate(-0.3 1.2)"><path d="M681.2 234.4 L685.6 230.2 H698.4 V241.8 L694 246.2 H681.2 Z" fill="#fff" stroke="#1a1a1a" stroke-width="1.1" stroke-linejoin="round"/><path d="M681.2 234.4 L685.6 230.2 V241.8 L681.2 246.2 Z" fill="#d3961b" stroke="#1a1a1a" stroke-width="1.1" stroke-linejoin="round"/><path d="M681.2 246.2 L685.6 241.8 H698.4 L694 246.2 Z" fill="#d3961b" stroke="#1a1a1a" stroke-width="1.1" stroke-linejoin="round"/><path d="M686.6 235 H695 M693 235 V241.4" stroke="#1a1a1a" stroke-width="1" stroke-dasharray="1 1.3" fill="none"/></g><path d="M683.4 290.6 L696 303.6 L690.6 304.4 L693.4 311.6 L690.4 312.6 L687.8 305.6 L683.6 308.6 Z" fill="#d3961b" stroke="#5a4a20" stroke-width="0.7" stroke-linejoin="round"/><path d="M681.6 343.4 Q684.2 336.4 691 337 Q696.2 337.8 697.6 342.4" fill="none" stroke="#d3961b" stroke-width="1.5"/><path d="M679.4 340.4 L681.4 345.4 L686 342.8" fill="none" stroke="#d3961b" stroke-width="1.5"/><path d="M681.6 348.6 Q685.4 354.6 691.6 353.2 Q695.6 352 697.4 348.4" fill="none" stroke="#1a1a1a" stroke-width="1.5"/><path d="M693.6 347.2 L698.4 347.4 L698.6 352.2" fill="none" stroke="#1a1a1a" stroke-width="1.5"/><path d="M689.5 382 V396.4 M682.4 389.2 H696.8" stroke="#d3961b" stroke-width="1.4"/><path d="M686.9 382.6 L689.5 379 L692.1 382.6 Z M686.9 395.8 L689.5 399.4 L692.1 395.8 Z M682.8 386.6 L679.2 389.2 L682.8 391.8 Z M696.2 386.6 L699.8 389.2 L696.2 391.8 Z" fill="#1a1a1a"/><circle cx="689" cy="432" r="5.6" fill="none" stroke="#d3961b" stroke-width="1.5"/><path d="M693 436.4 L697.6 441.4" stroke="#1a1a1a" stroke-width="1.7"/><path d="M675.6 432.6 H680.4 M697.4 432.6 H702.6 M700 430 V435.2" stroke="#1a1a1a" stroke-width="1.5"/><circle cx="688.4" cy="475.6" r="6.6" fill="none" stroke="#d3961b" stroke-width="1.5"/><path d="M693.2 480.8 L697.4 485.2" stroke="#1a1a1a" stroke-width="1.7"/><circle cx="689.5" cy="521.4" r="9.6" fill="none" stroke="#2a2a2a" stroke-width="1.2"/><rect x="688.4" y="519.6" width="2.3" height="6.6" fill="#d3961b"/><rect x="688.4" y="515.8" width="2.3" height="2.4" fill="#d3961b"/><path d="M678.2 572 L691.2 577.6 V588.4 L678.2 592.6 Z" fill="#111"/><path d="M682.4 573.6 V591.4 M686.4 575.4 V590 M678.2 579 L691.2 581.4 M678.2 585.8 L691.2 585" stroke="#d3961b" stroke-width="0.8"/><path d="M691.2 583.6 H695 M691.2 586.2 H697.2 M691.2 588.6 H699.4 M678.2 592.8 H701.6" stroke="#d3961b" stroke-width="1"/></svg>
<div class="a" style="left:664px;top:666px;width:841px;height:221px;background:#c0c5ce"></div>
<div class="a" style="left:664px;top:693px;width:841px;height:190px;background:#f7f7f7;border-radius:4px 0 0 0"></div>
<div class="tb " style="left:673px;top:669.34px;color:#5b6e8c;font-weight:normal;font-size:15px;transform:scaleX(0.952);">Console</div>
<div class="mono" style="left:672px;top:700.1px;color:#000">Error at Node 1: floating point exception</div>
<div class="mono" style="left:672px;top:732.1px;color:#000">Error at Node 3: floating point exception</div>
<div class="mono" style="left:672px;top:764.1px;color:#f01414">Error: floating point exception</div>
<div class="mono" style="left:672px;top:780.1px;color:#f01414">Error Object: #f</div>
<div class="mono" style="left:672px;top:828.1px;color:#000">ERROR: floating point exception</div>
<div class="mono" style="left:672px;top:844.1px;color:#000">Error object: #f</div>
</body></html>
